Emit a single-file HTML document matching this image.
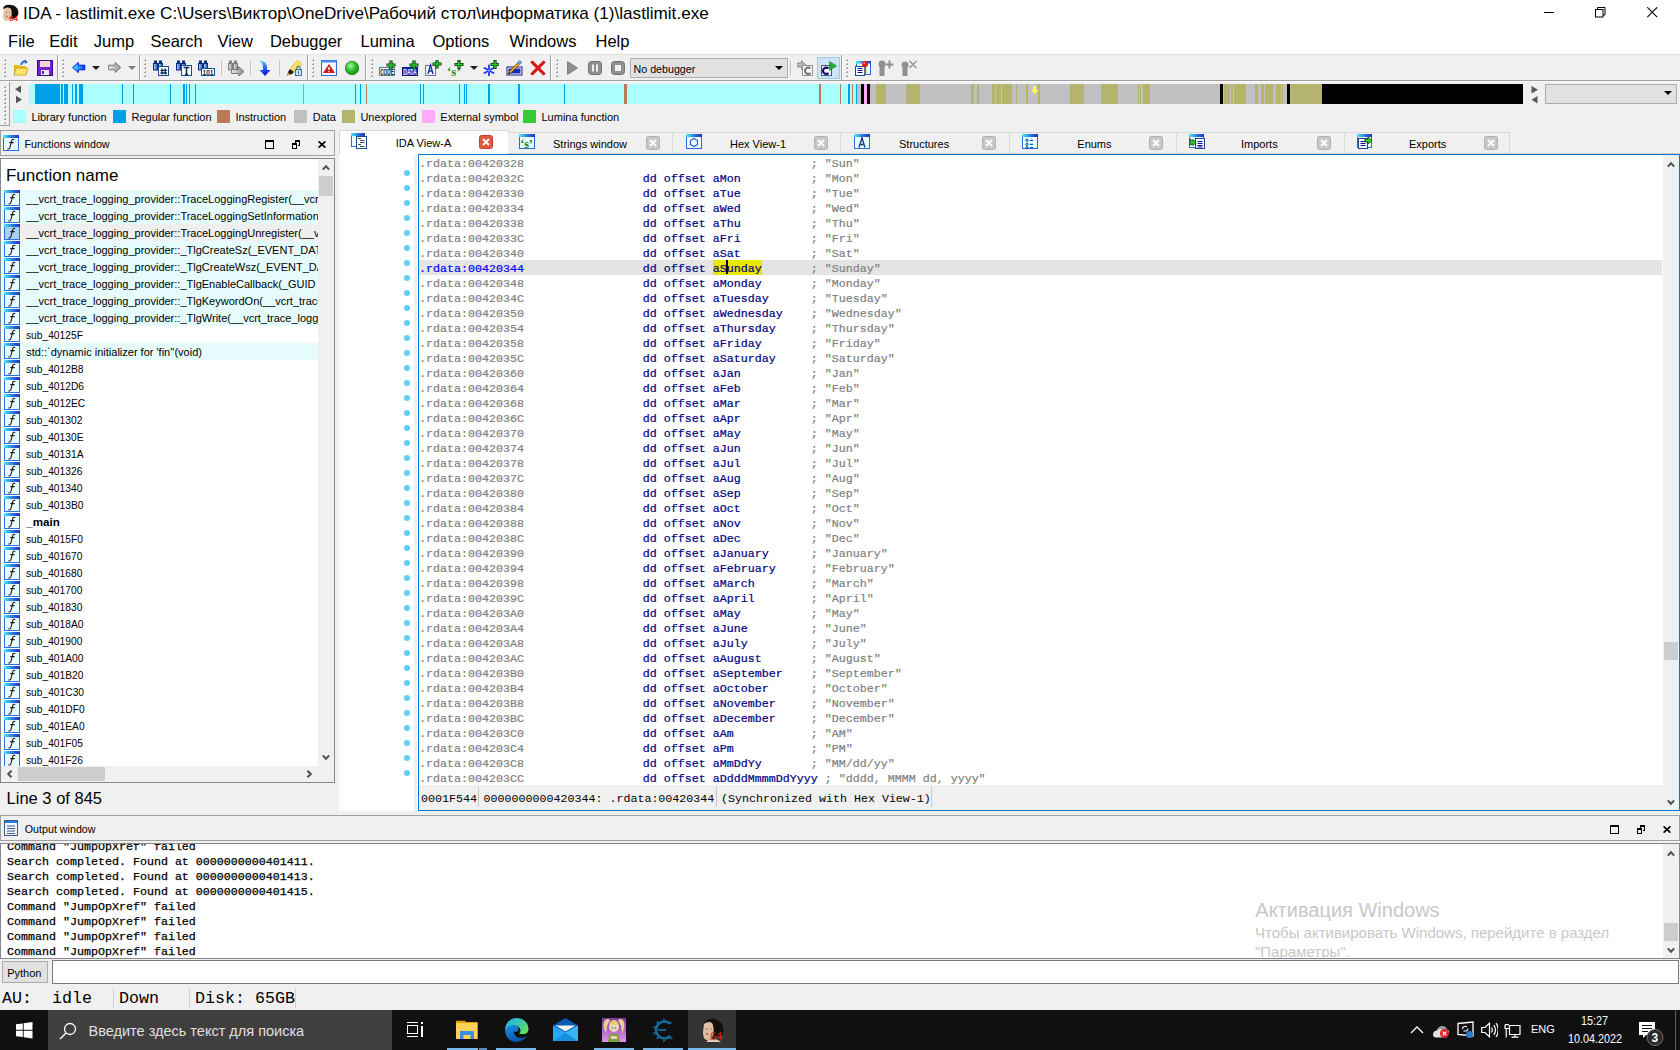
<!DOCTYPE html><html><head><meta charset='utf-8'><style>
*{margin:0;padding:0;box-sizing:border-box}
html,body{width:1680px;height:1050px;overflow:hidden;background:#f0f0f0}
body{position:relative;font-family:"Liberation Sans",sans-serif;color:#000}
div{position:absolute}
.t{white-space:pre;line-height:1}
.m{font-family:"Liberation Mono",monospace;white-space:pre;line-height:15px;font-size:11.67px}
</style></head><body><svg width="0" height="0" style="position:absolute"><defs><linearGradient id="tbar" x1="0" x2="1"><stop offset="0" stop-color="#50e8ff"/><stop offset=".5" stop-color="#2a80e0"/><stop offset="1" stop-color="#2030c8"/></linearGradient><linearGradient id="bin" x1="0" x2="1"><stop offset="0" stop-color="#b8e0ff"/><stop offset="1" stop-color="#1a50c0"/></linearGradient><linearGradient id="bing" x1="0" x2="1"><stop offset="0" stop-color="#e8e8e8"/><stop offset="1" stop-color="#888"/></linearGradient><linearGradient id="darr" x1="0" y1="0" x2=".3" y2="1"><stop offset="0" stop-color="#60e8ff"/><stop offset=".6" stop-color="#2060f0"/><stop offset="1" stop-color="#1010e0"/></linearGradient></defs></svg><div style="left:0px;top:0px;width:1680px;height:54px;background:#fff"></div><div class="t" style="left:23px;top:4.51px;font-size:17px;transform:scaleX(1.0075);transform-origin:0 0">IDA - lastlimit.exe C:\Users\Виктор\OneDrive\Рабочий стол\информатика (1)\lastlimit.exe</div><div class="t" style="left:8.1px;top:32.53px;font-size:16.5px;">File</div><div class="t" style="left:49.2px;top:32.53px;font-size:16.5px;">Edit</div><div class="t" style="left:93.8px;top:32.53px;font-size:16.5px;">Jump</div><div class="t" style="left:150.5px;top:32.53px;font-size:16.5px;">Search</div><div class="t" style="left:217.5px;top:32.53px;font-size:16.5px;">View</div><div class="t" style="left:269.9px;top:32.53px;font-size:16.5px;">Debugger</div><div class="t" style="left:360.5px;top:32.53px;font-size:16.5px;">Lumina</div><div class="t" style="left:432.5px;top:32.53px;font-size:16.5px;">Options</div><div class="t" style="left:509.5px;top:32.53px;font-size:16.5px;">Windows</div><div class="t" style="left:595.5px;top:32.53px;font-size:16.5px;">Help</div><div style="left:1544px;top:12px;width:10px;height:1px;background:#000"></div><svg style="position:absolute;left:1595px;top:7px;" width="11" height="11" viewBox="0 0 11 11"><rect x="0.5" y="2.5" width="7.5" height="7.5" fill="none" stroke="#000"/><path d="M2.5 2.5V0.5H10V8H8" fill="none" stroke="#000"/></svg><svg style="position:absolute;left:1647px;top:7px;" width="11" height="11" viewBox="0 0 11 11"><path d="M0.3 0.3L10.2 10.2M10.2 0.3L0.3 10.2" stroke="#000" stroke-width="1.1"/></svg><svg style="position:absolute;left:2px;top:4px;" width="17" height="18" viewBox="0 0 17 18"><path d="M1 4C2 1 6 0 9 1c3 0 6 2 7 5 1 3 0 6-2 8l-4 1z" fill="#120c0a"/><path d="M2 5c2-2 5-2 7 0 1 2 1 6 0 9-1 2-3 3-5 3-2 0-3-3-3-6z" fill="#e2c2a8"/><path d="M3.5 8.5h2M7 8.5h1.5" stroke="#a08070" stroke-width=".8"/><path d="M4 12.5c.6-.5 1.2-.5 1.6 0" stroke="#b03020" stroke-width=".9"/><text x="7" y="16.5" font-family="Liberation Sans" font-weight="bold" font-size="8" fill="#e03018">64</text></svg><div style="left:0px;top:54px;width:1680px;height:1px;background:#e3e3e3"></div><div style="left:0px;top:80px;width:1680px;height:1px;background:#a0a0a0"></div><div style="left:0px;top:81px;width:1680px;height:1px;background:#fafafa"></div><div style="left:4px;top:59px;width:2px;height:2px;background:linear-gradient(135deg,#fff 0 40%,#a0a0a0 40%)"></div><div style="left:4px;top:63px;width:2px;height:2px;background:linear-gradient(135deg,#fff 0 40%,#a0a0a0 40%)"></div><div style="left:4px;top:67px;width:2px;height:2px;background:linear-gradient(135deg,#fff 0 40%,#a0a0a0 40%)"></div><div style="left:4px;top:71px;width:2px;height:2px;background:linear-gradient(135deg,#fff 0 40%,#a0a0a0 40%)"></div><div style="left:4px;top:75px;width:2px;height:2px;background:linear-gradient(135deg,#fff 0 40%,#a0a0a0 40%)"></div><div style="left:62px;top:59px;width:2px;height:2px;background:linear-gradient(135deg,#fff 0 40%,#a0a0a0 40%)"></div><div style="left:62px;top:63px;width:2px;height:2px;background:linear-gradient(135deg,#fff 0 40%,#a0a0a0 40%)"></div><div style="left:62px;top:67px;width:2px;height:2px;background:linear-gradient(135deg,#fff 0 40%,#a0a0a0 40%)"></div><div style="left:62px;top:71px;width:2px;height:2px;background:linear-gradient(135deg,#fff 0 40%,#a0a0a0 40%)"></div><div style="left:62px;top:75px;width:2px;height:2px;background:linear-gradient(135deg,#fff 0 40%,#a0a0a0 40%)"></div><div style="left:144px;top:59px;width:2px;height:2px;background:linear-gradient(135deg,#fff 0 40%,#a0a0a0 40%)"></div><div style="left:144px;top:63px;width:2px;height:2px;background:linear-gradient(135deg,#fff 0 40%,#a0a0a0 40%)"></div><div style="left:144px;top:67px;width:2px;height:2px;background:linear-gradient(135deg,#fff 0 40%,#a0a0a0 40%)"></div><div style="left:144px;top:71px;width:2px;height:2px;background:linear-gradient(135deg,#fff 0 40%,#a0a0a0 40%)"></div><div style="left:144px;top:75px;width:2px;height:2px;background:linear-gradient(135deg,#fff 0 40%,#a0a0a0 40%)"></div><div style="left:312px;top:59px;width:2px;height:2px;background:linear-gradient(135deg,#fff 0 40%,#a0a0a0 40%)"></div><div style="left:312px;top:63px;width:2px;height:2px;background:linear-gradient(135deg,#fff 0 40%,#a0a0a0 40%)"></div><div style="left:312px;top:67px;width:2px;height:2px;background:linear-gradient(135deg,#fff 0 40%,#a0a0a0 40%)"></div><div style="left:312px;top:71px;width:2px;height:2px;background:linear-gradient(135deg,#fff 0 40%,#a0a0a0 40%)"></div><div style="left:312px;top:75px;width:2px;height:2px;background:linear-gradient(135deg,#fff 0 40%,#a0a0a0 40%)"></div><div style="left:371px;top:59px;width:2px;height:2px;background:linear-gradient(135deg,#fff 0 40%,#a0a0a0 40%)"></div><div style="left:371px;top:63px;width:2px;height:2px;background:linear-gradient(135deg,#fff 0 40%,#a0a0a0 40%)"></div><div style="left:371px;top:67px;width:2px;height:2px;background:linear-gradient(135deg,#fff 0 40%,#a0a0a0 40%)"></div><div style="left:371px;top:71px;width:2px;height:2px;background:linear-gradient(135deg,#fff 0 40%,#a0a0a0 40%)"></div><div style="left:371px;top:75px;width:2px;height:2px;background:linear-gradient(135deg,#fff 0 40%,#a0a0a0 40%)"></div><div style="left:556px;top:59px;width:2px;height:2px;background:linear-gradient(135deg,#fff 0 40%,#a0a0a0 40%)"></div><div style="left:556px;top:63px;width:2px;height:2px;background:linear-gradient(135deg,#fff 0 40%,#a0a0a0 40%)"></div><div style="left:556px;top:67px;width:2px;height:2px;background:linear-gradient(135deg,#fff 0 40%,#a0a0a0 40%)"></div><div style="left:556px;top:71px;width:2px;height:2px;background:linear-gradient(135deg,#fff 0 40%,#a0a0a0 40%)"></div><div style="left:556px;top:75px;width:2px;height:2px;background:linear-gradient(135deg,#fff 0 40%,#a0a0a0 40%)"></div><div style="left:846px;top:59px;width:2px;height:2px;background:linear-gradient(135deg,#fff 0 40%,#a0a0a0 40%)"></div><div style="left:846px;top:63px;width:2px;height:2px;background:linear-gradient(135deg,#fff 0 40%,#a0a0a0 40%)"></div><div style="left:846px;top:67px;width:2px;height:2px;background:linear-gradient(135deg,#fff 0 40%,#a0a0a0 40%)"></div><div style="left:846px;top:71px;width:2px;height:2px;background:linear-gradient(135deg,#fff 0 40%,#a0a0a0 40%)"></div><div style="left:846px;top:75px;width:2px;height:2px;background:linear-gradient(135deg,#fff 0 40%,#a0a0a0 40%)"></div><div style="left:57px;top:55px;width:1px;height:25px;background:#a0a0a0"></div><div style="left:58px;top:55px;width:1px;height:25px;background:#fff"></div><div style="left:139px;top:55px;width:1px;height:25px;background:#a0a0a0"></div><div style="left:140px;top:55px;width:1px;height:25px;background:#fff"></div><div style="left:307px;top:55px;width:1px;height:25px;background:#a0a0a0"></div><div style="left:308px;top:55px;width:1px;height:25px;background:#fff"></div><div style="left:365px;top:55px;width:1px;height:25px;background:#a0a0a0"></div><div style="left:366px;top:55px;width:1px;height:25px;background:#fff"></div><div style="left:550px;top:55px;width:1px;height:25px;background:#a0a0a0"></div><div style="left:551px;top:55px;width:1px;height:25px;background:#fff"></div><div style="left:841px;top:55px;width:1px;height:25px;background:#a0a0a0"></div><div style="left:842px;top:55px;width:1px;height:25px;background:#fff"></div><div style="left:221px;top:60px;width:1px;height:16px;background:#c8c8c8"></div><div style="left:250px;top:60px;width:1px;height:16px;background:#c8c8c8"></div><div style="left:279px;top:60px;width:1px;height:16px;background:#c8c8c8"></div><div style="left:790px;top:60px;width:1px;height:16px;background:#c8c8c8"></div><svg style="position:absolute;left:13px;top:60px;" width="16" height="16" viewBox="0 0 16 16"><path d="M1 5h5l1 1h6v8H1z" fill="#e6b820"/><path d="M3 8h12l-2 7H1z" fill="#fbe36a" stroke="#c89a10" stroke-width=".8"/><path d="M8 5c1-3 3-4 5-4" stroke="#2a6ad8" stroke-width="2" fill="none"/><path d="M12 0l3 2-3 2z" fill="#2a6ad8"/></svg><svg style="position:absolute;left:37px;top:60px;" width="16" height="16" viewBox="0 0 16 16"><rect x="0.5" y="0.5" width="15" height="15" fill="#7a20d0" stroke="#3a0a80"/><rect x="3" y="1" width="10" height="6" fill="#f0d8d8"/><rect x="4" y="10" width="8" height="5" fill="#e8e8f8"/><rect x="5" y="11" width="2" height="3" fill="#5a20b0"/></svg><svg style="position:absolute;left:72px;top:62px;" width="14" height="12" viewBox="0 0 14 12"><defs><linearGradient id="ba" x1="0" x2="1"><stop offset="0" stop-color="#40f0ff"/><stop offset="1" stop-color="#1040d0"/></linearGradient></defs><path d="M0.7 5.5L6.3 0.5V3.2H12.8V7.8H6.3V10.5z" fill="url(#ba)" stroke="#0010f0" stroke-width="1"/></svg><svg style="position:absolute;left:92px;top:66px;" width="8" height="5" viewBox="0 0 8 5"><path d="M0 0H8L4 4z" fill="#202020"/></svg><svg style="position:absolute;left:108px;top:62px;" width="14" height="12" viewBox="0 0 14 12"><defs><linearGradient id="fa" x1="0" x2="1"><stop offset="0" stop-color="#e8e8e8"/><stop offset="1" stop-color="#909090"/></linearGradient></defs><path d="M12.8 5.5L7.2 0.5V3.2H0.7V7.8H7.2V10.5z" fill="url(#fa)" stroke="#787878" stroke-width="1"/></svg><svg style="position:absolute;left:128px;top:66px;" width="8" height="5" viewBox="0 0 8 5"><path d="M0 0H8L4 4z" fill="#808080"/></svg><svg style="position:absolute;left:153px;top:60px;" width="16" height="16" viewBox="0 0 16 16"><rect x="1" y="0.5" width="3" height="3" fill="#0a2a80"/><rect x="6" y="0.5" width="3" height="3" fill="#0a2a80"/><rect x="0.5" y="3.5" width="4" height="6.5" fill="url(#bin)" stroke="#0a2a80"/><rect x="5.5" y="3.5" width="4" height="6.5" fill="url(#bin)" stroke="#0a2a80"/><rect x="4.5" y="5" width="1" height="2" fill="#0a2a80"/><rect x="5.5" y="6.5" width="10" height="9" fill="#fff" stroke="#1a4a8a"/><path d="M9 8.5v6M12.2 8.5v6M7.5 10.3h6.5M7.5 13h6.5" stroke="#0a2a5a" stroke-width="1.3"/></svg><svg style="position:absolute;left:176px;top:60px;" width="16" height="16" viewBox="0 0 16 16"><rect x="1" y="0.5" width="3" height="3" fill="#0a2a80"/><rect x="6" y="0.5" width="3" height="3" fill="#0a2a80"/><rect x="0.5" y="3.5" width="4" height="6.5" fill="url(#bin)" stroke="#0a2a80"/><rect x="5.5" y="3.5" width="4" height="6.5" fill="url(#bin)" stroke="#0a2a80"/><rect x="4.5" y="5" width="1" height="2" fill="#0a2a80"/><rect x="5.5" y="5.5" width="10" height="10" fill="#fff" stroke="#1a4a8a"/><path d="M7.5 7.5h6M10.5 7.5v7M9 14.5h3" stroke="#0a2a5a" stroke-width="1.6"/></svg><svg style="position:absolute;left:198px;top:60px;" width="17" height="16" viewBox="0 0 17 16"><rect x="1" y="0.5" width="3" height="3" fill="#0a2a80"/><rect x="6" y="0.5" width="3" height="3" fill="#0a2a80"/><rect x="0.5" y="3.5" width="4" height="6.5" fill="url(#bin)" stroke="#0a2a80"/><rect x="5.5" y="3.5" width="4" height="6.5" fill="url(#bin)" stroke="#0a2a80"/><rect x="4.5" y="5" width="1" height="2" fill="#0a2a80"/><rect x="3.5" y="8.5" width="13" height="7" fill="#fff" stroke="#1a4a8a"/><text x="4.6" y="14.6" textLength="10.8" lengthAdjust="spacingAndGlyphs" font-family="Liberation Sans" font-weight="bold" font-size="7" fill="#0a2a5a">101</text></svg><svg style="position:absolute;left:228px;top:60px;" width="17" height="16" viewBox="0 0 17 16"><rect x="1" y="0.5" width="3" height="3" fill="#808080"/><rect x="6" y="0.5" width="3" height="3" fill="#808080"/><rect x="0.5" y="3.5" width="4" height="6.5" fill="url(#bing)" stroke="#808080"/><rect x="5.5" y="3.5" width="4" height="6.5" fill="url(#bing)" stroke="#808080"/><rect x="4.5" y="5" width="1" height="2" fill="#808080"/><path d="M3.5 9.5h7v-3l5.5 5-5.5 5v-3h-7z" fill="url(#bing)" stroke="#787878" stroke-width="1"/></svg><svg style="position:absolute;left:258px;top:60px;" width="14" height="16" viewBox="0 0 14 16"><path d="M1 0.5C6 0.5 9 3 9 8V10h3.5L7 16 1.5 10H5V8.5C5 5 4 2 1 0.5z" fill="url(#darr)"/></svg><svg style="position:absolute;left:286px;top:60px;" width="16" height="16" viewBox="0 0 16 16"><path d="M4 9L10 1.5c1-1 2.5-1 3.5 0l1 1c1 1 1 2.5 0 3.5L8 12z" fill="#f8e060" stroke="#e0b010" stroke-width=".6"/><path d="M4 9l4 3-2 2-5 1.5 1.5-4.5z" fill="#202020"/><path d="M1 15.5l3-1-2-2z" fill="#f0b000"/><rect x="9.5" y="9.5" width="6" height="6" fill="#c8dcf0" stroke="#4070a0"/><path d="M10.8 9.5V8a1.7 1.7 0 0 1 3.4 0v1.5" fill="none" stroke="#4070a0" stroke-width="1.1"/><rect x="12" y="11.5" width="1" height="2" fill="#305080"/></svg><svg style="position:absolute;left:321px;top:60px;" width="16" height="16" viewBox="0 0 16 16"><rect x="0.5" y="0.5" width="15" height="15" fill="#f4f8ff" stroke="#2a6ad8"/><rect x="0.5" y="0.5" width="15" height="2" fill="#4a90f0"/><path d="M8 4L14 13H2z" fill="#d01818"/><rect x="7.3" y="7" width="1.4" height="3" fill="#fff"/><rect x="7.3" y="11" width="1.4" height="1.2" fill="#fff"/></svg><svg style="position:absolute;left:345px;top:60px;" width="15" height="16" viewBox="0 0 15 16"><defs><radialGradient id="gc" cx=".4" cy=".35" r=".7"><stop offset="0" stop-color="#a8f8a8"/><stop offset=".5" stop-color="#30c030"/><stop offset="1" stop-color="#108810"/></radialGradient></defs><circle cx="7" cy="8" r="6.8" fill="url(#gc)" stroke="#0a700a" stroke-width=".6"/></svg><svg style="position:absolute;left:379px;top:60px;" width="17" height="16" viewBox="0 0 17 16"><rect x="0.5" y="7.5" width="15" height="8" fill="#e8f0fa" stroke="#6a7a90"/><text x="1.2" y="14.6" textLength="13.6" lengthAdjust="spacingAndGlyphs" font-family="Liberation Sans" font-weight="bold" font-size="8.5" fill="#0a2a40">CODE</text><path d="M12 0.5v9M7.5 5h9" stroke="#063806" stroke-width="3.2"/><path d="M12 1.2000000000000002v7.6M8.2 5h7.6" stroke="#28c828" stroke-width="1.5"/></svg><svg style="position:absolute;left:402px;top:60px;" width="17" height="16" viewBox="0 0 17 16"><rect x="0.5" y="7.5" width="15" height="8" fill="#1a30c0" stroke="#0a1a80"/><text x="1.2" y="14.6" textLength="13.6" lengthAdjust="spacingAndGlyphs" font-family="Liberation Sans" font-weight="bold" font-size="8.5" fill="#e0f0ff">DATA</text><path d="M12 0.5v9M7.5 5h9" stroke="#063806" stroke-width="3.2"/><path d="M12 1.2000000000000002v7.6M8.2 5h7.6" stroke="#28c828" stroke-width="1.5"/></svg><svg style="position:absolute;left:425px;top:60px;" width="17" height="16" viewBox="0 0 17 16"><rect x="0.5" y="5.5" width="10" height="10" fill="#f0f4fa" stroke="#6a7a90"/><path d="M3 14L5.5 5 8 14M3.8 11h3.4" fill="none" stroke="#1a3aa0" stroke-width="1.4"/><path d="M12 -0.5v9M7.5 4h9" stroke="#063806" stroke-width="3.2"/><path d="M12 0.20000000000000018v7.6M8.2 4h7.6" stroke="#28c828" stroke-width="1.5"/></svg><svg style="position:absolute;left:447px;top:60px;" width="17" height="16" viewBox="0 0 17 16"><text x="0" y="15.5" font-family="Liberation Serif" font-weight="bold" font-size="13" fill="#208a20">‘s’</text><path d="M12 0.0v9M7.5 4.5h9" stroke="#063806" stroke-width="3.2"/><path d="M12 0.7000000000000002v7.6M8.2 4.5h7.6" stroke="#28c828" stroke-width="1.5"/></svg><svg style="position:absolute;left:470px;top:66px;" width="8" height="5" viewBox="0 0 8 5"><path d="M0 0H8L4 4z" fill="#202020"/></svg><svg style="position:absolute;left:483px;top:60px;" width="16" height="16" viewBox="0 0 16 16"><path d="M6 5.5v10M1.5 8l9 5M10.5 8l-9 5" stroke="#2030f0" stroke-width="1.8" stroke-linecap="round"/><circle cx="6" cy="10.5" r="1" fill="#80c0ff"/><path d="M12 0.0v9M7.5 4.5h9" stroke="#063806" stroke-width="3.2"/><path d="M12 0.7000000000000002v7.6M8.2 4.5h7.6" stroke="#28c828" stroke-width="1.5"/></svg><svg style="position:absolute;left:506px;top:60px;" width="17" height="16" viewBox="0 0 17 16"><rect x="0.5" y="6.5" width="16" height="9" fill="#0a1a70"/><rect x="1.5" y="7.5" width="14" height="7" fill="#fff"/><rect x="2.5" y="8.5" width="12" height="5" fill="#1a2ab8"/><path d="M3.5 13L13 3" stroke="#803800" stroke-width="2.6"/><path d="M3.5 13L13 3" stroke="#f8c030" stroke-width="1.4"/><circle cx="13.8" cy="2.4" r="1.6" fill="#60c8f0" stroke="#2060a0" stroke-width=".6"/><path d="M2.5 14l1.5-1.5" stroke="#000" stroke-width="1.2"/></svg><svg style="position:absolute;left:530px;top:60px;" width="16" height="16" viewBox="0 0 16 16"><path d="M1.5 1.5L14.5 14.5M14.5 1.5L1.5 14.5" stroke="#b80000" stroke-width="3"/><path d="M1.5 1.5L14.5 14.5M14.5 1.5L1.5 14.5" stroke="#f01818" stroke-width="1.6"/></svg><svg style="position:absolute;left:567px;top:61px;" width="11" height="14" viewBox="0 0 11 14"><path d="M0.5 0.5L10.5 7 0.5 13.5z" fill="#909090" stroke="#808080"/></svg><svg style="position:absolute;left:588px;top:61px;" width="14" height="14" viewBox="0 0 14 14"><rect x="0.5" y="0.5" width="13" height="13" rx="3" fill="#909090" stroke="#707070"/><rect x="4" y="3.5" width="2" height="7" fill="#f0f0f0"/><rect x="8" y="3.5" width="2" height="7" fill="#f0f0f0"/></svg><svg style="position:absolute;left:611px;top:61px;" width="14" height="14" viewBox="0 0 14 14"><rect x="0.5" y="0.5" width="13" height="13" rx="3" fill="#909090" stroke="#707070"/><rect x="4" y="4" width="6" height="6" fill="#f0f0f0"/></svg><div style="left:630px;top:58px;width:158px;height:20px;background:#e1e1e1;border:1px solid #adadad"></div><div class="t" style="left:633.5px;top:63.94px;font-size:10.7px;">No debugger</div><svg style="position:absolute;left:775px;top:66px;" width="8" height="5" viewBox="0 0 8 5"><path d="M0 0H8L4 4z" fill="#000"/></svg><svg style="position:absolute;left:797px;top:60px;" width="17" height="16" viewBox="0 0 17 16"><path d="M0 3h4.5V0.5L9 5 4.5 9.5V7H0z" fill="#b8b8b8" stroke="#808080" stroke-width=".8"/><rect x="5.5" y="5.5" width="10" height="10" fill="#fafafa" stroke="#909090"/><path d="M13.5 8.5a3.2 3.2 0 1 0 0 4.5" fill="none" stroke="#707070" stroke-width="2"/></svg><div style="left:817px;top:57px;width:23px;height:22px;background:#cce4f7;border:1px solid #99c9ef"></div><svg style="position:absolute;left:821px;top:60px;" width="17" height="16" viewBox="0 0 17 16"><rect x="0.5" y="5.5" width="10" height="10" fill="#fff" stroke="#3a5a90"/><path d="M7.5 8.5a3.2 3.2 0 1 0 0 4.5" fill="none" stroke="#0a0a70" stroke-width="2.2"/><path d="M8.5 1.5L15.5 6 8.5 10.5z" fill="#20b030" stroke="#107010" stroke-width=".6"/></svg><svg style="position:absolute;left:855px;top:60px;" width="16" height="16" viewBox="0 0 16 16"><rect x="1.5" y="1.5" width="14" height="13" fill="#eaffff" stroke="#2a6ad8"/><rect x="1" y="1" width="15" height="2.5" fill="url(#tbar)"/><rect x="0.5" y="6.5" width="9" height="9" fill="#fff" stroke="#1a4a88"/><path d="M2.5 8.5h5M2.5 10.5h5M2.5 12.5h5" stroke="#0a0aa0"/><rect x="9" y="6" width="2.2" height="8" fill="#707070"/><circle cx="10" cy="4" r="3" fill="#f01010"/><circle cx="9.2" cy="3.2" r="1" fill="#ff9090"/></svg><svg style="position:absolute;left:878px;top:60px;" width="16" height="16" viewBox="0 0 16 16"><circle cx="4" cy="4" r="3.5" fill="#909090"/><rect x="1.5" y="6" width="5" height="10" fill="#909090"/><path d="M11.5 0.5v8M7.5 4.5h8" stroke="#909090" stroke-width="2"/></svg><svg style="position:absolute;left:901px;top:60px;" width="16" height="16" viewBox="0 0 16 16"><circle cx="4" cy="5" r="3.5" fill="#909090"/><rect x="1.5" y="7" width="5" height="9" fill="#909090"/><path d="M8.5 1l7 7M15.5 1l-7 7" stroke="#909090" stroke-width="1.4"/></svg><div style="left:0px;top:82px;width:10px;height:44px;border-right:1px solid #a0a0a0"></div><div style="left:0px;top:125px;width:10px;height:1px;background:#a0a0a0"></div><div style="left:4px;top:86px;width:2px;height:2px;background:linear-gradient(135deg,#fff 0 40%,#a0a0a0 40%)"></div><div style="left:4px;top:90px;width:2px;height:2px;background:linear-gradient(135deg,#fff 0 40%,#a0a0a0 40%)"></div><div style="left:4px;top:94px;width:2px;height:2px;background:linear-gradient(135deg,#fff 0 40%,#a0a0a0 40%)"></div><div style="left:4px;top:98px;width:2px;height:2px;background:linear-gradient(135deg,#fff 0 40%,#a0a0a0 40%)"></div><div style="left:4px;top:102px;width:2px;height:2px;background:linear-gradient(135deg,#fff 0 40%,#a0a0a0 40%)"></div><div style="left:4px;top:106px;width:2px;height:2px;background:linear-gradient(135deg,#fff 0 40%,#a0a0a0 40%)"></div><div style="left:4px;top:110px;width:2px;height:2px;background:linear-gradient(135deg,#fff 0 40%,#a0a0a0 40%)"></div><div style="left:4px;top:114px;width:2px;height:2px;background:linear-gradient(135deg,#fff 0 40%,#a0a0a0 40%)"></div><div style="left:4px;top:118px;width:2px;height:2px;background:linear-gradient(135deg,#fff 0 40%,#a0a0a0 40%)"></div><div style="left:4px;top:122px;width:2px;height:2px;background:linear-gradient(135deg,#fff 0 40%,#a0a0a0 40%)"></div><svg style="position:absolute;left:15px;top:85px;" width="8" height="19" viewBox="0 0 8 19"><path d="M6 0.6V8.1L0 4.35z" fill="#555"/><path d="M1 10.7V18.2L7 14.45z" fill="#555"/></svg><svg style="position:absolute;left:29px;top:84px;shape-rendering:crispEdges" width="1494" height="20" viewBox="0 0 1494 20"><rect x="0" y="0" width="1494" height="20" fill="#c0c0c0"/><rect x="0" y="0" width="847" height="20" fill="#aaffff"/><rect x="6" y="0" width="25" height="20" fill="#00a0e8"/><rect x="32" y="0" width="1.5" height="20" fill="#00a0e8"/><rect x="35" y="0" width="4" height="20" fill="#00a0e8"/><rect x="43" y="0" width="1.2999999999999972" height="20" fill="#00a0e8"/><rect x="46" y="0" width="1.5" height="20" fill="#00a0e8"/><rect x="50" y="0" width="4" height="20" fill="#00a0e8"/><rect x="93" y="0" width="1" height="20" fill="#00a0e8"/><rect x="104" y="0" width="1" height="20" fill="#00a0e8"/><rect x="141" y="0" width="1" height="20" fill="#00a0e8"/><rect x="154" y="0" width="1.5999999999999943" height="20" fill="#00a0e8"/><rect x="156.6" y="0" width="0.9000000000000057" height="20" fill="#00a0e8"/><rect x="160" y="0" width="1" height="20" fill="#00a0e8"/><rect x="166.3" y="0" width="1.0" height="20" fill="#00a0e8"/><rect x="326" y="0" width="1" height="20" fill="#00a0e8"/><rect x="331" y="0" width="1" height="20" fill="#00a0e8"/><rect x="391" y="0" width="1" height="20" fill="#00a0e8"/><rect x="394" y="0" width="1" height="20" fill="#00a0e8"/><rect x="430" y="0" width="1" height="20" fill="#00a0e8"/><rect x="435" y="0" width="1" height="20" fill="#00a0e8"/><rect x="437" y="0" width="1" height="20" fill="#00a0e8"/><rect x="459" y="0" width="2" height="20" fill="#00a0e8"/><rect x="489" y="0" width="2" height="20" fill="#00a0e8"/><rect x="535" y="0" width="1" height="20" fill="#00a0e8"/><rect x="819" y="0" width="2" height="20" fill="#00a0e8"/><rect x="826.8" y="0" width="1.2000000000000455" height="20" fill="#00a0e8"/><rect x="274" y="0" width="1" height="20" fill="#a0a0a0"/><rect x="337" y="0" width="1" height="20" fill="#b87a58"/><rect x="594.5" y="0" width="3.0" height="20" fill="#b87a58"/><rect x="790" y="0" width="2" height="20" fill="#b87a58"/><rect x="811" y="0" width="1" height="20" fill="#b87a58"/><rect x="823" y="0" width="1" height="20" fill="#b87a58"/><rect x="828" y="0" width="19" height="20" fill="#c0c0c0"/><rect x="832" y="0" width="3" height="20" fill="#000"/><rect x="835" y="0" width="3" height="20" fill="#ffaaff"/><rect x="838" y="0" width="3" height="20" fill="#000"/><rect x="847" y="0" width="10" height="20" fill="#b4b46e"/><rect x="877" y="0" width="14" height="20" fill="#b4b46e"/><rect x="942" y="0" width="3" height="20" fill="#b4b46e"/><rect x="948" y="0" width="1.5" height="20" fill="#b4b46e"/><rect x="963" y="0" width="3" height="20" fill="#b4b46e"/><rect x="967" y="0" width="5" height="20" fill="#b4b46e"/><rect x="973" y="0" width="10" height="20" fill="#b4b46e"/><rect x="987" y="0" width="1" height="20" fill="#b4b46e"/><rect x="997" y="0" width="2" height="20" fill="#b4b46e"/><rect x="1009" y="0" width="2" height="20" fill="#b4b46e"/><rect x="1041" y="0" width="14" height="20" fill="#b4b46e"/><rect x="1072" y="0" width="17" height="20" fill="#b4b46e"/><rect x="1109" y="0" width="1" height="20" fill="#b4b46e"/><rect x="1111" y="0" width="1" height="20" fill="#b4b46e"/><rect x="1114" y="0" width="7" height="20" fill="#b4b46e"/><rect x="1195" y="0" width="6" height="20" fill="#b4b46e"/><rect x="1202" y="0" width="2" height="20" fill="#b4b46e"/><rect x="1205" y="0" width="12" height="20" fill="#b4b46e"/><rect x="1226" y="0" width="3" height="20" fill="#b4b46e"/><rect x="1232" y="0" width="3" height="20" fill="#b4b46e"/><rect x="1236" y="0" width="8" height="20" fill="#b4b46e"/><rect x="1247" y="0" width="5" height="20" fill="#b4b46e"/><rect x="1253" y="0" width="1" height="20" fill="#b4b46e"/><rect x="1261" y="0" width="32" height="20" fill="#b4b46e"/><rect x="1191" y="0" width="3" height="20" fill="#000"/><rect x="1257.5" y="0" width="3.5" height="20" fill="#000"/><rect x="1293" y="0" width="201" height="20" fill="#000"/><path d="M3.5 2h3v4h2l-3.5 4-3.5-4h2z" fill="#ffff40" transform="translate(1000.5,0)"/></svg><svg style="position:absolute;left:1531px;top:86px;" width="8" height="18" viewBox="0 0 8 18"><path d="M0.5 0V7.5L7 3.75z" fill="#5a5a5a"/><path d="M6.5 10V17.5L0.5 13.75z" fill="#5a5a5a"/></svg><div style="left:1545px;top:84px;width:132px;height:20px;background:#e1e1e1;border:1px solid #adadad"></div><svg style="position:absolute;left:1664px;top:91px;" width="8" height="5" viewBox="0 0 8 5"><path d="M0 0H8L4 4z" fill="#000"/></svg><div style="left:13px;top:110px;width:13px;height:13px;background:#aaffff"></div><div class="t" style="left:31.4px;top:112.19px;font-size:11px;">Library function</div><div style="left:113px;top:110px;width:13px;height:13px;background:#00a0e8"></div><div class="t" style="left:131.5px;top:112.19px;font-size:11px;">Regular function</div><div style="left:217px;top:110px;width:13px;height:13px;background:#b87a58"></div><div class="t" style="left:235.4px;top:112.19px;font-size:11px;">Instruction</div><div style="left:294px;top:110px;width:13px;height:13px;background:#c0c0c0"></div><div class="t" style="left:312.7px;top:112.19px;font-size:11px;">Data</div><div style="left:342px;top:110px;width:13px;height:13px;background:#b4b46e"></div><div class="t" style="left:360.4px;top:112.19px;font-size:11px;">Unexplored</div><div style="left:422px;top:110px;width:13px;height:13px;background:#ffaaff"></div><div class="t" style="left:440.3px;top:112.19px;font-size:11px;">External symbol</div><div style="left:523px;top:110px;width:13px;height:13px;background:#33cc33"></div><div class="t" style="left:541.5px;top:112.19px;font-size:11px;">Lumina function</div><div style="left:0px;top:130px;width:335px;height:26px;border:1px solid #a0a0a0;background:#f0f0f0"></div><svg style="position:absolute;left:3px;top:135px;" width="16" height="16" viewBox="0 0 16 16"><rect x="0.5" y="0.5" width="15" height="15" fill="#e8fcff" stroke="#2a70e0"/><rect x="0" y="0" width="16" height="3" fill="url(#tbar)"/><path d="M11.3 4.6c-.9-.7-2.1-.4-2.5.9L6.9 12.6c-.4 1.3-1.5 1.7-2.5 1.1M6.3 7.6h4.3" fill="none" stroke="#151515" stroke-width="1.05"/></svg><div class="t" style="left:24.6px;top:138.74px;font-size:10.7px;">Functions window</div><svg style="position:absolute;left:265px;top:140px;shape-rendering:crispEdges" width="9" height="9" viewBox="0 0 9 9"><path d="M0 0H9V9H0z M1 2H8V8H1z" fill="#000" fill-rule="evenodd"/></svg><svg style="position:absolute;left:292px;top:140px;shape-rendering:crispEdges" width="8" height="9" viewBox="0 0 8 9"><path d="M3 0H8V6H6V5H7V2H4V3H3z" fill="#000"/><path d="M0 3H5V9H0z M1 5H4V8H1z" fill="#000" fill-rule="evenodd"/></svg><svg style="position:absolute;left:318px;top:141px;" width="8" height="7" viewBox="0 0 8 7"><path d="M0.6 0.4L7.4 6.6M7.4 0.4L0.6 6.6" stroke="#000" stroke-width="1.7"/></svg><div style="left:0px;top:158px;width:335px;height:625px;border:1px solid #828790;background:#fff"></div><div class="t" style="left:5.9px;top:167.31px;font-size:17px;">Function name</div><div style="left:1px;top:159px;width:317px;height:607px;overflow:hidden"><div style="left:0px;top:31px;width:317px;height:17px;background:#e6fcfc"></div><svg style="position:absolute;left:3px;top:31px;" width="16" height="16" viewBox="0 0 16 16"><rect x="0.5" y="0.5" width="15" height="15" fill="#e8fcff" stroke="#2a70e0"/><rect x="0" y="0" width="16" height="3" fill="url(#tbar)"/><path d="M11.3 4.6c-.9-.7-2.1-.4-2.5.9L6.9 12.6c-.4 1.3-1.5 1.7-2.5 1.1M6.3 7.6h4.3" fill="none" stroke="#151515" stroke-width="1.05"/></svg><div class="t" style="left:25.3px;top:34.99px;font-size:11px;">__vcrt_trace_logging_provider::TraceLoggingRegister(__vcrt_trace</div><div style="left:0px;top:48px;width:317px;height:17px;background:#e6fcfc"></div><svg style="position:absolute;left:3px;top:48px;" width="16" height="16" viewBox="0 0 16 16"><rect x="0.5" y="0.5" width="15" height="15" fill="#e8fcff" stroke="#2a70e0"/><rect x="0" y="0" width="16" height="3" fill="url(#tbar)"/><path d="M11.3 4.6c-.9-.7-2.1-.4-2.5.9L6.9 12.6c-.4 1.3-1.5 1.7-2.5 1.1M6.3 7.6h4.3" fill="none" stroke="#151515" stroke-width="1.05"/></svg><div class="t" style="left:25.3px;top:51.99px;font-size:11px;">__vcrt_trace_logging_provider::TraceLoggingSetInformation(__v</div><div style="left:2px;top:65px;width:315px;height:17px;background:#efefef"></div><svg style="position:absolute;left:3px;top:65px;" width="16" height="16" viewBox="0 0 16 16"><rect x="0.5" y="0.5" width="15" height="15" fill="#a8d0f0" stroke="#2a70e0"/><rect x="0" y="0" width="16" height="3" fill="url(#tbar)"/><path d="M11.3 4.6c-.9-.7-2.1-.4-2.5.9L6.9 12.6c-.4 1.3-1.5 1.7-2.5 1.1M6.3 7.6h4.3" fill="none" stroke="#151515" stroke-width="1.05"/></svg><div class="t" style="left:25.3px;top:68.99px;font-size:11px;">__vcrt_trace_logging_provider::TraceLoggingUnregister(__vcrt</div><div style="left:0px;top:82px;width:317px;height:17px;background:#e6fcfc"></div><svg style="position:absolute;left:3px;top:82px;" width="16" height="16" viewBox="0 0 16 16"><rect x="0.5" y="0.5" width="15" height="15" fill="#e8fcff" stroke="#2a70e0"/><rect x="0" y="0" width="16" height="3" fill="url(#tbar)"/><path d="M11.3 4.6c-.9-.7-2.1-.4-2.5.9L6.9 12.6c-.4 1.3-1.5 1.7-2.5 1.1M6.3 7.6h4.3" fill="none" stroke="#151515" stroke-width="1.05"/></svg><div class="t" style="left:25.3px;top:85.99px;font-size:11px;">__vcrt_trace_logging_provider::_TlgCreateSz(_EVENT_DATA_DES</div><div style="left:0px;top:99px;width:317px;height:17px;background:#e6fcfc"></div><svg style="position:absolute;left:3px;top:99px;" width="16" height="16" viewBox="0 0 16 16"><rect x="0.5" y="0.5" width="15" height="15" fill="#e8fcff" stroke="#2a70e0"/><rect x="0" y="0" width="16" height="3" fill="url(#tbar)"/><path d="M11.3 4.6c-.9-.7-2.1-.4-2.5.9L6.9 12.6c-.4 1.3-1.5 1.7-2.5 1.1M6.3 7.6h4.3" fill="none" stroke="#151515" stroke-width="1.05"/></svg><div class="t" style="left:25.3px;top:102.99px;font-size:11px;">__vcrt_trace_logging_provider::_TlgCreateWsz(_EVENT_DATA_DE</div><div style="left:0px;top:116px;width:317px;height:17px;background:#e6fcfc"></div><svg style="position:absolute;left:3px;top:116px;" width="16" height="16" viewBox="0 0 16 16"><rect x="0.5" y="0.5" width="15" height="15" fill="#e8fcff" stroke="#2a70e0"/><rect x="0" y="0" width="16" height="3" fill="url(#tbar)"/><path d="M11.3 4.6c-.9-.7-2.1-.4-2.5.9L6.9 12.6c-.4 1.3-1.5 1.7-2.5 1.1M6.3 7.6h4.3" fill="none" stroke="#151515" stroke-width="1.05"/></svg><div class="t" style="left:25.3px;top:119.99px;font-size:11px;">__vcrt_trace_logging_provider::_TlgEnableCallback(_GUID const</div><div style="left:0px;top:133px;width:317px;height:17px;background:#e6fcfc"></div><svg style="position:absolute;left:3px;top:133px;" width="16" height="16" viewBox="0 0 16 16"><rect x="0.5" y="0.5" width="15" height="15" fill="#e8fcff" stroke="#2a70e0"/><rect x="0" y="0" width="16" height="3" fill="url(#tbar)"/><path d="M11.3 4.6c-.9-.7-2.1-.4-2.5.9L6.9 12.6c-.4 1.3-1.5 1.7-2.5 1.1M6.3 7.6h4.3" fill="none" stroke="#151515" stroke-width="1.05"/></svg><div class="t" style="left:25.3px;top:136.99px;font-size:11px;">__vcrt_trace_logging_provider::_TlgKeywordOn(__vcrt_trace_lo</div><div style="left:0px;top:150px;width:317px;height:17px;background:#e6fcfc"></div><svg style="position:absolute;left:3px;top:150px;" width="16" height="16" viewBox="0 0 16 16"><rect x="0.5" y="0.5" width="15" height="15" fill="#e8fcff" stroke="#2a70e0"/><rect x="0" y="0" width="16" height="3" fill="url(#tbar)"/><path d="M11.3 4.6c-.9-.7-2.1-.4-2.5.9L6.9 12.6c-.4 1.3-1.5 1.7-2.5 1.1M6.3 7.6h4.3" fill="none" stroke="#151515" stroke-width="1.05"/></svg><div class="t" style="left:25.3px;top:153.99px;font-size:11px;">__vcrt_trace_logging_provider::_TlgWrite(__vcrt_trace_logging</div><svg style="position:absolute;left:3px;top:167px;" width="16" height="16" viewBox="0 0 16 16"><rect x="0.5" y="0.5" width="15" height="15" fill="#e8fcff" stroke="#2a70e0"/><rect x="0" y="0" width="16" height="3" fill="url(#tbar)"/><path d="M11.3 4.6c-.9-.7-2.1-.4-2.5.9L6.9 12.6c-.4 1.3-1.5 1.7-2.5 1.1M6.3 7.6h4.3" fill="none" stroke="#151515" stroke-width="1.05"/></svg><div class="t" style="left:24.6px;top:170.99px;font-size:11px;;transform:scaleX(.93);transform-origin:0 0">sub_40125F</div><div style="left:0px;top:184px;width:317px;height:17px;background:#e6fcfc"></div><svg style="position:absolute;left:3px;top:184px;" width="16" height="16" viewBox="0 0 16 16"><rect x="0.5" y="0.5" width="15" height="15" fill="#e8fcff" stroke="#2a70e0"/><rect x="0" y="0" width="16" height="3" fill="url(#tbar)"/><path d="M11.3 4.6c-.9-.7-2.1-.4-2.5.9L6.9 12.6c-.4 1.3-1.5 1.7-2.5 1.1M6.3 7.6h4.3" fill="none" stroke="#151515" stroke-width="1.05"/></svg><div class="t" style="left:25.3px;top:187.99px;font-size:11px;">std::`dynamic initializer for &#x27;fin&#x27;&#x27;(void)</div><svg style="position:absolute;left:3px;top:201px;" width="16" height="16" viewBox="0 0 16 16"><rect x="0.5" y="0.5" width="15" height="15" fill="#e8fcff" stroke="#2a70e0"/><rect x="0" y="0" width="16" height="3" fill="url(#tbar)"/><path d="M11.3 4.6c-.9-.7-2.1-.4-2.5.9L6.9 12.6c-.4 1.3-1.5 1.7-2.5 1.1M6.3 7.6h4.3" fill="none" stroke="#151515" stroke-width="1.05"/></svg><div class="t" style="left:24.6px;top:204.99px;font-size:11px;;transform:scaleX(.93);transform-origin:0 0">sub_4012B8</div><svg style="position:absolute;left:3px;top:218px;" width="16" height="16" viewBox="0 0 16 16"><rect x="0.5" y="0.5" width="15" height="15" fill="#e8fcff" stroke="#2a70e0"/><rect x="0" y="0" width="16" height="3" fill="url(#tbar)"/><path d="M11.3 4.6c-.9-.7-2.1-.4-2.5.9L6.9 12.6c-.4 1.3-1.5 1.7-2.5 1.1M6.3 7.6h4.3" fill="none" stroke="#151515" stroke-width="1.05"/></svg><div class="t" style="left:24.6px;top:221.99px;font-size:11px;;transform:scaleX(.93);transform-origin:0 0">sub_4012D6</div><svg style="position:absolute;left:3px;top:235px;" width="16" height="16" viewBox="0 0 16 16"><rect x="0.5" y="0.5" width="15" height="15" fill="#e8fcff" stroke="#2a70e0"/><rect x="0" y="0" width="16" height="3" fill="url(#tbar)"/><path d="M11.3 4.6c-.9-.7-2.1-.4-2.5.9L6.9 12.6c-.4 1.3-1.5 1.7-2.5 1.1M6.3 7.6h4.3" fill="none" stroke="#151515" stroke-width="1.05"/></svg><div class="t" style="left:24.6px;top:238.99px;font-size:11px;;transform:scaleX(.93);transform-origin:0 0">sub_4012EC</div><svg style="position:absolute;left:3px;top:252px;" width="16" height="16" viewBox="0 0 16 16"><rect x="0.5" y="0.5" width="15" height="15" fill="#e8fcff" stroke="#2a70e0"/><rect x="0" y="0" width="16" height="3" fill="url(#tbar)"/><path d="M11.3 4.6c-.9-.7-2.1-.4-2.5.9L6.9 12.6c-.4 1.3-1.5 1.7-2.5 1.1M6.3 7.6h4.3" fill="none" stroke="#151515" stroke-width="1.05"/></svg><div class="t" style="left:24.6px;top:255.99px;font-size:11px;;transform:scaleX(.93);transform-origin:0 0">sub_401302</div><svg style="position:absolute;left:3px;top:269px;" width="16" height="16" viewBox="0 0 16 16"><rect x="0.5" y="0.5" width="15" height="15" fill="#e8fcff" stroke="#2a70e0"/><rect x="0" y="0" width="16" height="3" fill="url(#tbar)"/><path d="M11.3 4.6c-.9-.7-2.1-.4-2.5.9L6.9 12.6c-.4 1.3-1.5 1.7-2.5 1.1M6.3 7.6h4.3" fill="none" stroke="#151515" stroke-width="1.05"/></svg><div class="t" style="left:24.6px;top:272.99px;font-size:11px;;transform:scaleX(.93);transform-origin:0 0">sub_40130E</div><svg style="position:absolute;left:3px;top:286px;" width="16" height="16" viewBox="0 0 16 16"><rect x="0.5" y="0.5" width="15" height="15" fill="#e8fcff" stroke="#2a70e0"/><rect x="0" y="0" width="16" height="3" fill="url(#tbar)"/><path d="M11.3 4.6c-.9-.7-2.1-.4-2.5.9L6.9 12.6c-.4 1.3-1.5 1.7-2.5 1.1M6.3 7.6h4.3" fill="none" stroke="#151515" stroke-width="1.05"/></svg><div class="t" style="left:24.6px;top:289.99px;font-size:11px;;transform:scaleX(.93);transform-origin:0 0">sub_40131A</div><svg style="position:absolute;left:3px;top:303px;" width="16" height="16" viewBox="0 0 16 16"><rect x="0.5" y="0.5" width="15" height="15" fill="#e8fcff" stroke="#2a70e0"/><rect x="0" y="0" width="16" height="3" fill="url(#tbar)"/><path d="M11.3 4.6c-.9-.7-2.1-.4-2.5.9L6.9 12.6c-.4 1.3-1.5 1.7-2.5 1.1M6.3 7.6h4.3" fill="none" stroke="#151515" stroke-width="1.05"/></svg><div class="t" style="left:24.6px;top:306.99px;font-size:11px;;transform:scaleX(.93);transform-origin:0 0">sub_401326</div><svg style="position:absolute;left:3px;top:320px;" width="16" height="16" viewBox="0 0 16 16"><rect x="0.5" y="0.5" width="15" height="15" fill="#e8fcff" stroke="#2a70e0"/><rect x="0" y="0" width="16" height="3" fill="url(#tbar)"/><path d="M11.3 4.6c-.9-.7-2.1-.4-2.5.9L6.9 12.6c-.4 1.3-1.5 1.7-2.5 1.1M6.3 7.6h4.3" fill="none" stroke="#151515" stroke-width="1.05"/></svg><div class="t" style="left:24.6px;top:323.99px;font-size:11px;;transform:scaleX(.93);transform-origin:0 0">sub_401340</div><svg style="position:absolute;left:3px;top:337px;" width="16" height="16" viewBox="0 0 16 16"><rect x="0.5" y="0.5" width="15" height="15" fill="#e8fcff" stroke="#2a70e0"/><rect x="0" y="0" width="16" height="3" fill="url(#tbar)"/><path d="M11.3 4.6c-.9-.7-2.1-.4-2.5.9L6.9 12.6c-.4 1.3-1.5 1.7-2.5 1.1M6.3 7.6h4.3" fill="none" stroke="#151515" stroke-width="1.05"/></svg><div class="t" style="left:24.6px;top:340.99px;font-size:11px;;transform:scaleX(.93);transform-origin:0 0">sub_4013B0</div><svg style="position:absolute;left:3px;top:354px;" width="16" height="16" viewBox="0 0 16 16"><rect x="0.5" y="0.5" width="15" height="15" fill="#e8fcff" stroke="#2a70e0"/><rect x="0" y="0" width="16" height="3" fill="url(#tbar)"/><path d="M11.3 4.6c-.9-.7-2.1-.4-2.5.9L6.9 12.6c-.4 1.3-1.5 1.7-2.5 1.1M6.3 7.6h4.3" fill="none" stroke="#151515" stroke-width="1.05"/></svg><div class="t" style="left:25.3px;top:357.48px;font-size:11.6px;font-weight:bold">_main</div><svg style="position:absolute;left:3px;top:371px;" width="16" height="16" viewBox="0 0 16 16"><rect x="0.5" y="0.5" width="15" height="15" fill="#e8fcff" stroke="#2a70e0"/><rect x="0" y="0" width="16" height="3" fill="url(#tbar)"/><path d="M11.3 4.6c-.9-.7-2.1-.4-2.5.9L6.9 12.6c-.4 1.3-1.5 1.7-2.5 1.1M6.3 7.6h4.3" fill="none" stroke="#151515" stroke-width="1.05"/></svg><div class="t" style="left:24.6px;top:374.99px;font-size:11px;;transform:scaleX(.93);transform-origin:0 0">sub_4015F0</div><svg style="position:absolute;left:3px;top:388px;" width="16" height="16" viewBox="0 0 16 16"><rect x="0.5" y="0.5" width="15" height="15" fill="#e8fcff" stroke="#2a70e0"/><rect x="0" y="0" width="16" height="3" fill="url(#tbar)"/><path d="M11.3 4.6c-.9-.7-2.1-.4-2.5.9L6.9 12.6c-.4 1.3-1.5 1.7-2.5 1.1M6.3 7.6h4.3" fill="none" stroke="#151515" stroke-width="1.05"/></svg><div class="t" style="left:24.6px;top:391.99px;font-size:11px;;transform:scaleX(.93);transform-origin:0 0">sub_401670</div><svg style="position:absolute;left:3px;top:405px;" width="16" height="16" viewBox="0 0 16 16"><rect x="0.5" y="0.5" width="15" height="15" fill="#e8fcff" stroke="#2a70e0"/><rect x="0" y="0" width="16" height="3" fill="url(#tbar)"/><path d="M11.3 4.6c-.9-.7-2.1-.4-2.5.9L6.9 12.6c-.4 1.3-1.5 1.7-2.5 1.1M6.3 7.6h4.3" fill="none" stroke="#151515" stroke-width="1.05"/></svg><div class="t" style="left:24.6px;top:408.99px;font-size:11px;;transform:scaleX(.93);transform-origin:0 0">sub_401680</div><svg style="position:absolute;left:3px;top:422px;" width="16" height="16" viewBox="0 0 16 16"><rect x="0.5" y="0.5" width="15" height="15" fill="#e8fcff" stroke="#2a70e0"/><rect x="0" y="0" width="16" height="3" fill="url(#tbar)"/><path d="M11.3 4.6c-.9-.7-2.1-.4-2.5.9L6.9 12.6c-.4 1.3-1.5 1.7-2.5 1.1M6.3 7.6h4.3" fill="none" stroke="#151515" stroke-width="1.05"/></svg><div class="t" style="left:24.6px;top:425.99px;font-size:11px;;transform:scaleX(.93);transform-origin:0 0">sub_401700</div><svg style="position:absolute;left:3px;top:439px;" width="16" height="16" viewBox="0 0 16 16"><rect x="0.5" y="0.5" width="15" height="15" fill="#e8fcff" stroke="#2a70e0"/><rect x="0" y="0" width="16" height="3" fill="url(#tbar)"/><path d="M11.3 4.6c-.9-.7-2.1-.4-2.5.9L6.9 12.6c-.4 1.3-1.5 1.7-2.5 1.1M6.3 7.6h4.3" fill="none" stroke="#151515" stroke-width="1.05"/></svg><div class="t" style="left:24.6px;top:442.99px;font-size:11px;;transform:scaleX(.93);transform-origin:0 0">sub_401830</div><svg style="position:absolute;left:3px;top:456px;" width="16" height="16" viewBox="0 0 16 16"><rect x="0.5" y="0.5" width="15" height="15" fill="#e8fcff" stroke="#2a70e0"/><rect x="0" y="0" width="16" height="3" fill="url(#tbar)"/><path d="M11.3 4.6c-.9-.7-2.1-.4-2.5.9L6.9 12.6c-.4 1.3-1.5 1.7-2.5 1.1M6.3 7.6h4.3" fill="none" stroke="#151515" stroke-width="1.05"/></svg><div class="t" style="left:24.6px;top:459.99px;font-size:11px;;transform:scaleX(.93);transform-origin:0 0">sub_4018A0</div><svg style="position:absolute;left:3px;top:473px;" width="16" height="16" viewBox="0 0 16 16"><rect x="0.5" y="0.5" width="15" height="15" fill="#e8fcff" stroke="#2a70e0"/><rect x="0" y="0" width="16" height="3" fill="url(#tbar)"/><path d="M11.3 4.6c-.9-.7-2.1-.4-2.5.9L6.9 12.6c-.4 1.3-1.5 1.7-2.5 1.1M6.3 7.6h4.3" fill="none" stroke="#151515" stroke-width="1.05"/></svg><div class="t" style="left:24.6px;top:476.99px;font-size:11px;;transform:scaleX(.93);transform-origin:0 0">sub_401900</div><svg style="position:absolute;left:3px;top:490px;" width="16" height="16" viewBox="0 0 16 16"><rect x="0.5" y="0.5" width="15" height="15" fill="#e8fcff" stroke="#2a70e0"/><rect x="0" y="0" width="16" height="3" fill="url(#tbar)"/><path d="M11.3 4.6c-.9-.7-2.1-.4-2.5.9L6.9 12.6c-.4 1.3-1.5 1.7-2.5 1.1M6.3 7.6h4.3" fill="none" stroke="#151515" stroke-width="1.05"/></svg><div class="t" style="left:24.6px;top:493.99px;font-size:11px;;transform:scaleX(.93);transform-origin:0 0">sub_401A00</div><svg style="position:absolute;left:3px;top:507px;" width="16" height="16" viewBox="0 0 16 16"><rect x="0.5" y="0.5" width="15" height="15" fill="#e8fcff" stroke="#2a70e0"/><rect x="0" y="0" width="16" height="3" fill="url(#tbar)"/><path d="M11.3 4.6c-.9-.7-2.1-.4-2.5.9L6.9 12.6c-.4 1.3-1.5 1.7-2.5 1.1M6.3 7.6h4.3" fill="none" stroke="#151515" stroke-width="1.05"/></svg><div class="t" style="left:24.6px;top:510.99px;font-size:11px;;transform:scaleX(.93);transform-origin:0 0">sub_401B20</div><svg style="position:absolute;left:3px;top:524px;" width="16" height="16" viewBox="0 0 16 16"><rect x="0.5" y="0.5" width="15" height="15" fill="#e8fcff" stroke="#2a70e0"/><rect x="0" y="0" width="16" height="3" fill="url(#tbar)"/><path d="M11.3 4.6c-.9-.7-2.1-.4-2.5.9L6.9 12.6c-.4 1.3-1.5 1.7-2.5 1.1M6.3 7.6h4.3" fill="none" stroke="#151515" stroke-width="1.05"/></svg><div class="t" style="left:24.6px;top:527.99px;font-size:11px;;transform:scaleX(.93);transform-origin:0 0">sub_401C30</div><svg style="position:absolute;left:3px;top:541px;" width="16" height="16" viewBox="0 0 16 16"><rect x="0.5" y="0.5" width="15" height="15" fill="#e8fcff" stroke="#2a70e0"/><rect x="0" y="0" width="16" height="3" fill="url(#tbar)"/><path d="M11.3 4.6c-.9-.7-2.1-.4-2.5.9L6.9 12.6c-.4 1.3-1.5 1.7-2.5 1.1M6.3 7.6h4.3" fill="none" stroke="#151515" stroke-width="1.05"/></svg><div class="t" style="left:24.6px;top:544.99px;font-size:11px;;transform:scaleX(.93);transform-origin:0 0">sub_401DF0</div><svg style="position:absolute;left:3px;top:558px;" width="16" height="16" viewBox="0 0 16 16"><rect x="0.5" y="0.5" width="15" height="15" fill="#e8fcff" stroke="#2a70e0"/><rect x="0" y="0" width="16" height="3" fill="url(#tbar)"/><path d="M11.3 4.6c-.9-.7-2.1-.4-2.5.9L6.9 12.6c-.4 1.3-1.5 1.7-2.5 1.1M6.3 7.6h4.3" fill="none" stroke="#151515" stroke-width="1.05"/></svg><div class="t" style="left:24.6px;top:561.99px;font-size:11px;;transform:scaleX(.93);transform-origin:0 0">sub_401EA0</div><svg style="position:absolute;left:3px;top:575px;" width="16" height="16" viewBox="0 0 16 16"><rect x="0.5" y="0.5" width="15" height="15" fill="#e8fcff" stroke="#2a70e0"/><rect x="0" y="0" width="16" height="3" fill="url(#tbar)"/><path d="M11.3 4.6c-.9-.7-2.1-.4-2.5.9L6.9 12.6c-.4 1.3-1.5 1.7-2.5 1.1M6.3 7.6h4.3" fill="none" stroke="#151515" stroke-width="1.05"/></svg><div class="t" style="left:24.6px;top:578.99px;font-size:11px;;transform:scaleX(.93);transform-origin:0 0">sub_401F05</div><svg style="position:absolute;left:3px;top:592px;" width="16" height="16" viewBox="0 0 16 16"><rect x="0.5" y="0.5" width="15" height="15" fill="#e8fcff" stroke="#2a70e0"/><rect x="0" y="0" width="16" height="3" fill="url(#tbar)"/><path d="M11.3 4.6c-.9-.7-2.1-.4-2.5.9L6.9 12.6c-.4 1.3-1.5 1.7-2.5 1.1M6.3 7.6h4.3" fill="none" stroke="#151515" stroke-width="1.05"/></svg><div class="t" style="left:24.6px;top:595.99px;font-size:11px;;transform:scaleX(.93);transform-origin:0 0">sub_401F26</div></div><div style="left:318px;top:159px;width:16px;height:607px;background:#f0f0f0"></div><svg style="position:absolute;left:322px;top:164px;" width="8" height="7" viewBox="0 0 8 7"><path d="M0.8 5.6L4 2.2 7.2 5.6" fill="none" stroke="#505050" stroke-width="2"/></svg><div style="left:319px;top:176px;width:14px;height:20px;background:#cdcdcd"></div><svg style="position:absolute;left:322px;top:754px;" width="8" height="7" viewBox="0 0 8 7"><path d="M0.8 1.4L4 4.8 7.2 1.4" fill="none" stroke="#505050" stroke-width="2"/></svg><div style="left:1px;top:766px;width:317px;height:16px;background:#f0f0f0"></div><svg style="position:absolute;left:6px;top:770px;" width="7" height="8" viewBox="0 0 7 8"><path d="M5.6 0.8L2.2 4 5.6 7.2" fill="none" stroke="#505050" stroke-width="2"/></svg><div style="left:18px;top:767px;width:87px;height:14px;background:#cdcdcd"></div><svg style="position:absolute;left:306px;top:770px;" width="7" height="8" viewBox="0 0 7 8"><path d="M1.4 0.8L4.8 4 1.4 7.2" fill="none" stroke="#505050" stroke-width="2"/></svg><div style="left:318px;top:766px;width:16px;height:16px;background:#f0f0f0"></div><div class="t" style="left:6.6px;top:789.73px;font-size:16.5px;">Line 3 of 845</div><div style="left:339px;top:130px;width:170px;height:24px;background:#fff;border:1px solid #d9d9d9;border-bottom:none"></div><svg style="position:absolute;left:351px;top:133px;" width="16" height="16" viewBox="0 0 16 16"><rect x="0.5" y="0.5" width="13" height="13" fill="#eaffff" stroke="#2a70e0"/><rect x="0" y="0" width="14" height="3" fill="url(#tbar)"/><rect x="5.5" y="3.5" width="10" height="12" fill="#fff" stroke="#1a4a88"/><path d="M7 5.5h3M9 7.5h4.5M9 9.5h4.5M7 11.5h3M9 13.5h4.5" stroke="#404850" stroke-width="1"/></svg><div class="t" style="left:395.8px;top:138.49px;font-size:11px;">IDA View-A</div><svg style="position:absolute;left:479px;top:135px;" width="14" height="14" viewBox="0 0 14 14"><rect x="0.5" y="0.5" width="13" height="13" rx="2" fill="#e05a40" stroke="#c04030"/><path d="M4 4l6 6M10 4l-6 6" stroke="#fff" stroke-width="1.8"/></svg><div style="left:508px;top:132px;width:165px;height:22px;background:#f0f0f0;border-top:1px solid #d9d9d9;border-right:1px solid #d9d9d9;border-bottom:1px solid #d4ccc4"></div><svg style="position:absolute;left:519px;top:133px;" width="16" height="16" viewBox="0 0 16 16"><rect x="0.5" y="1.5" width="15" height="14" fill="#eaffff" stroke="#2a6ad8"/><rect x="0" y="1" width="16" height="3" fill="url(#tbar)"/><text x="1.2" y="14.5" font-family="Liberation Serif" font-weight="bold" font-size="12" fill="#108010">‘s’</text></svg><div class="t" style="left:553px;top:138.99px;font-size:11px;">Strings window</div><svg style="position:absolute;left:646px;top:136px;" width="14" height="14" viewBox="0 0 14 14"><rect x="0.5" y="0.5" width="13" height="13" rx="2" fill="#c8c8c8" stroke="#b0b0b0"/><path d="M4 4l6 6M10 4l-6 6" stroke="#fff" stroke-width="1.8"/></svg><div style="left:673px;top:132px;width:168px;height:22px;background:#f0f0f0;border-top:1px solid #d9d9d9;border-right:1px solid #d9d9d9;border-bottom:1px solid #d4ccc4"></div><svg style="position:absolute;left:686px;top:133px;" width="16" height="16" viewBox="0 0 16 16"><rect x="0.5" y="1.5" width="15" height="14" fill="#eaffff" stroke="#2a6ad8"/><rect x="0" y="1" width="16" height="3" fill="url(#tbar)"/><path d="M8 5.5l3.5 2v4l-3.5 2-3.5-2v-4z" fill="none" stroke="#3050e0" stroke-width="1.2"/></svg><div class="t" style="left:730px;top:138.99px;font-size:11px;">Hex View-1</div><svg style="position:absolute;left:814px;top:136px;" width="14" height="14" viewBox="0 0 14 14"><rect x="0.5" y="0.5" width="13" height="13" rx="2" fill="#c8c8c8" stroke="#b0b0b0"/><path d="M4 4l6 6M10 4l-6 6" stroke="#fff" stroke-width="1.8"/></svg><div style="left:841px;top:132px;width:169px;height:22px;background:#f0f0f0;border-top:1px solid #d9d9d9;border-right:1px solid #d9d9d9;border-bottom:1px solid #d4ccc4"></div><svg style="position:absolute;left:854px;top:133px;" width="16" height="16" viewBox="0 0 16 16"><rect x="0.5" y="1.5" width="15" height="14" fill="#eaffff" stroke="#2a6ad8"/><rect x="0" y="1" width="16" height="3" fill="url(#tbar)"/><path d="M5 14.5L8 5l3 9.5M6 11.5h4" fill="none" stroke="#1a3a90" stroke-width="1.4"/><circle cx="8" cy="5.5" r="1" fill="#1a3a90"/></svg><div class="t" style="left:899px;top:138.99px;font-size:11px;">Structures</div><svg style="position:absolute;left:982px;top:136px;" width="14" height="14" viewBox="0 0 14 14"><rect x="0.5" y="0.5" width="13" height="13" rx="2" fill="#c8c8c8" stroke="#b0b0b0"/><path d="M4 4l6 6M10 4l-6 6" stroke="#fff" stroke-width="1.8"/></svg><div style="left:1010px;top:132px;width:167px;height:22px;background:#f0f0f0;border-top:1px solid #d9d9d9;border-right:1px solid #d9d9d9;border-bottom:1px solid #d4ccc4"></div><svg style="position:absolute;left:1022px;top:133px;" width="16" height="16" viewBox="0 0 16 16"><rect x="0.5" y="1.5" width="15" height="14" fill="#eaffff" stroke="#2a6ad8"/><rect x="0" y="1" width="16" height="3" fill="url(#tbar)"/><path d="M5 5.8l1.5 1.5L5 8.8 3.5 7.3zM5 9.8l1.5 1.5L5 12.8 3.5 11.3zM5 13.3l1.3 1.2-1.3 1.2-1.3-1.2z" fill="#20e0f0" stroke="#0a1a80" stroke-width=".8"/><path d="M8 7.3h3M8 11.3h3M8 14.5h3" stroke="#0a50c0" stroke-width="1.2"/></svg><div class="t" style="left:1077.3px;top:138.99px;font-size:11px;">Enums</div><svg style="position:absolute;left:1149px;top:136px;" width="14" height="14" viewBox="0 0 14 14"><rect x="0.5" y="0.5" width="13" height="13" rx="2" fill="#c8c8c8" stroke="#b0b0b0"/><path d="M4 4l6 6M10 4l-6 6" stroke="#fff" stroke-width="1.8"/></svg><div style="left:1177px;top:132px;width:168px;height:22px;background:#f0f0f0;border-top:1px solid #d9d9d9;border-right:1px solid #d9d9d9;border-bottom:1px solid #d4ccc4"></div><svg style="position:absolute;left:1189px;top:133px;" width="16" height="16" viewBox="0 0 16 16"><rect x="0.5" y="1.5" width="14" height="13" fill="#eaffff" stroke="#2a6ad8"/><rect x="0" y="1" width="15" height="3" fill="url(#tbar)"/><rect x="6.5" y="5.5" width="9" height="10" fill="#fff" stroke="#1a4a88"/><path d="M8.5 8.5h5M8.5 10.5h5M8.5 12.5h5M8.5 14h5" stroke="#0a0a90" stroke-width="1"/><path d="M1 6l3 2V6.5l3 3-3 3V11L1 12z" fill="#30d030" stroke="#0a400a" stroke-width=".8"/></svg><div class="t" style="left:1241px;top:138.99px;font-size:11px;">Imports</div><svg style="position:absolute;left:1317px;top:136px;" width="14" height="14" viewBox="0 0 14 14"><rect x="0.5" y="0.5" width="13" height="13" rx="2" fill="#c8c8c8" stroke="#b0b0b0"/><path d="M4 4l6 6M10 4l-6 6" stroke="#fff" stroke-width="1.8"/></svg><div style="left:1345px;top:132px;width:165px;height:22px;background:#f0f0f0;border-top:1px solid #d9d9d9;border-right:1px solid #d9d9d9;border-bottom:1px solid #d4ccc4"></div><svg style="position:absolute;left:1357px;top:133px;" width="16" height="16" viewBox="0 0 16 16"><rect x="0.5" y="1.5" width="14" height="13" fill="#eaffff" stroke="#2a6ad8"/><rect x="0" y="1" width="15" height="3" fill="url(#tbar)"/><rect x="1.5" y="5.5" width="9" height="10" fill="#fff" stroke="#1a4a88"/><path d="M3.5 8.5h5M3.5 10.5h5M3.5 12.5h5" stroke="#0a0a90" stroke-width="1"/><path d="M8 6h3V4l4 3.5-4 3.5V9H8z" fill="#30d030" stroke="#0a400a" stroke-width=".8"/></svg><div class="t" style="left:1409px;top:138.99px;font-size:11px;">Exports</div><svg style="position:absolute;left:1484px;top:136px;" width="14" height="14" viewBox="0 0 14 14"><rect x="0.5" y="0.5" width="13" height="13" rx="2" fill="#c8c8c8" stroke="#b0b0b0"/><path d="M4 4l6 6M10 4l-6 6" stroke="#fff" stroke-width="1.8"/></svg><div style="left:1510px;top:153px;width:170px;height:1px;background:#d4ccc4"></div><div style="left:339px;top:154px;width:75px;height:657px;background:#fff"></div><div style="left:414px;top:154px;width:3px;height:657px;background:#f0f0f0"></div><div style="left:417px;top:154px;width:1px;height:657px;background:#fff"></div><div style="left:418px;top:154px;width:1262px;height:657px;border:1px solid #0078d7;background:#fff"></div><svg style="position:absolute;left:404px;top:155px;" width="6" height="630" viewBox="0 0 6 630"><circle cx="3" cy="18" r="3" fill="#5ccfff"/><circle cx="3" cy="33" r="3" fill="#5ccfff"/><circle cx="3" cy="48" r="3" fill="#5ccfff"/><circle cx="3" cy="63" r="3" fill="#5ccfff"/><circle cx="3" cy="78" r="3" fill="#5ccfff"/><circle cx="3" cy="93" r="3" fill="#5ccfff"/><circle cx="3" cy="108" r="3" fill="#5ccfff"/><circle cx="3" cy="123" r="3" fill="#5ccfff"/><circle cx="3" cy="138" r="3" fill="#5ccfff"/><circle cx="3" cy="153" r="3" fill="#5ccfff"/><circle cx="3" cy="168" r="3" fill="#5ccfff"/><circle cx="3" cy="183" r="3" fill="#5ccfff"/><circle cx="3" cy="198" r="3" fill="#5ccfff"/><circle cx="3" cy="213" r="3" fill="#5ccfff"/><circle cx="3" cy="228" r="3" fill="#5ccfff"/><circle cx="3" cy="243" r="3" fill="#5ccfff"/><circle cx="3" cy="258" r="3" fill="#5ccfff"/><circle cx="3" cy="273" r="3" fill="#5ccfff"/><circle cx="3" cy="288" r="3" fill="#5ccfff"/><circle cx="3" cy="303" r="3" fill="#5ccfff"/><circle cx="3" cy="318" r="3" fill="#5ccfff"/><circle cx="3" cy="333" r="3" fill="#5ccfff"/><circle cx="3" cy="348" r="3" fill="#5ccfff"/><circle cx="3" cy="363" r="3" fill="#5ccfff"/><circle cx="3" cy="378" r="3" fill="#5ccfff"/><circle cx="3" cy="393" r="3" fill="#5ccfff"/><circle cx="3" cy="408" r="3" fill="#5ccfff"/><circle cx="3" cy="423" r="3" fill="#5ccfff"/><circle cx="3" cy="438" r="3" fill="#5ccfff"/><circle cx="3" cy="453" r="3" fill="#5ccfff"/><circle cx="3" cy="468" r="3" fill="#5ccfff"/><circle cx="3" cy="483" r="3" fill="#5ccfff"/><circle cx="3" cy="498" r="3" fill="#5ccfff"/><circle cx="3" cy="513" r="3" fill="#5ccfff"/><circle cx="3" cy="528" r="3" fill="#5ccfff"/><circle cx="3" cy="543" r="3" fill="#5ccfff"/><circle cx="3" cy="558" r="3" fill="#5ccfff"/><circle cx="3" cy="573" r="3" fill="#5ccfff"/><circle cx="3" cy="588" r="3" fill="#5ccfff"/><circle cx="3" cy="603" r="3" fill="#5ccfff"/><circle cx="3" cy="618" r="3" fill="#5ccfff"/></svg><div style="left:419px;top:260px;width:1243px;height:15px;background:#e4e4e4"></div><div style="left:713px;top:260px;width:49px;height:15px;background:#e8e800"></div><div class="m" style="left:419px;top:155px;width:1244px;height:630px;overflow:hidden;padding-top:2px;-webkit-text-stroke-width:0.2px"><span style="color:#808080">.rdata:00420328</span>                                         <span style="color:#808080">; &quot;Sun&quot;</span>
<span style="color:#808080">.rdata:0042032C</span>                 <span style="color:#000080">dd offset aMon</span>          <span style="color:#808080">; &quot;Mon&quot;</span>
<span style="color:#808080">.rdata:00420330</span>                 <span style="color:#000080">dd offset aTue</span>          <span style="color:#808080">; &quot;Tue&quot;</span>
<span style="color:#808080">.rdata:00420334</span>                 <span style="color:#000080">dd offset aWed</span>          <span style="color:#808080">; &quot;Wed&quot;</span>
<span style="color:#808080">.rdata:00420338</span>                 <span style="color:#000080">dd offset aThu</span>          <span style="color:#808080">; &quot;Thu&quot;</span>
<span style="color:#808080">.rdata:0042033C</span>                 <span style="color:#000080">dd offset aFri</span>          <span style="color:#808080">; &quot;Fri&quot;</span>
<span style="color:#808080">.rdata:00420340</span>                 <span style="color:#000080">dd offset aSat</span>          <span style="color:#808080">; &quot;Sat&quot;</span>
<span style="color:#0000ff">.rdata:00420344</span>                 <span style="color:#000080">dd offset aSunday</span>       <span style="color:#808080">; &quot;Sunday&quot;</span>
<span style="color:#808080">.rdata:00420348</span>                 <span style="color:#000080">dd offset aMonday</span>       <span style="color:#808080">; &quot;Monday&quot;</span>
<span style="color:#808080">.rdata:0042034C</span>                 <span style="color:#000080">dd offset aTuesday</span>      <span style="color:#808080">; &quot;Tuesday&quot;</span>
<span style="color:#808080">.rdata:00420350</span>                 <span style="color:#000080">dd offset aWednesday</span>    <span style="color:#808080">; &quot;Wednesday&quot;</span>
<span style="color:#808080">.rdata:00420354</span>                 <span style="color:#000080">dd offset aThursday</span>     <span style="color:#808080">; &quot;Thursday&quot;</span>
<span style="color:#808080">.rdata:00420358</span>                 <span style="color:#000080">dd offset aFriday</span>       <span style="color:#808080">; &quot;Friday&quot;</span>
<span style="color:#808080">.rdata:0042035C</span>                 <span style="color:#000080">dd offset aSaturday</span>     <span style="color:#808080">; &quot;Saturday&quot;</span>
<span style="color:#808080">.rdata:00420360</span>                 <span style="color:#000080">dd offset aJan</span>          <span style="color:#808080">; &quot;Jan&quot;</span>
<span style="color:#808080">.rdata:00420364</span>                 <span style="color:#000080">dd offset aFeb</span>          <span style="color:#808080">; &quot;Feb&quot;</span>
<span style="color:#808080">.rdata:00420368</span>                 <span style="color:#000080">dd offset aMar</span>          <span style="color:#808080">; &quot;Mar&quot;</span>
<span style="color:#808080">.rdata:0042036C</span>                 <span style="color:#000080">dd offset aApr</span>          <span style="color:#808080">; &quot;Apr&quot;</span>
<span style="color:#808080">.rdata:00420370</span>                 <span style="color:#000080">dd offset aMay</span>          <span style="color:#808080">; &quot;May&quot;</span>
<span style="color:#808080">.rdata:00420374</span>                 <span style="color:#000080">dd offset aJun</span>          <span style="color:#808080">; &quot;Jun&quot;</span>
<span style="color:#808080">.rdata:00420378</span>                 <span style="color:#000080">dd offset aJul</span>          <span style="color:#808080">; &quot;Jul&quot;</span>
<span style="color:#808080">.rdata:0042037C</span>                 <span style="color:#000080">dd offset aAug</span>          <span style="color:#808080">; &quot;Aug&quot;</span>
<span style="color:#808080">.rdata:00420380</span>                 <span style="color:#000080">dd offset aSep</span>          <span style="color:#808080">; &quot;Sep&quot;</span>
<span style="color:#808080">.rdata:00420384</span>                 <span style="color:#000080">dd offset aOct</span>          <span style="color:#808080">; &quot;Oct&quot;</span>
<span style="color:#808080">.rdata:00420388</span>                 <span style="color:#000080">dd offset aNov</span>          <span style="color:#808080">; &quot;Nov&quot;</span>
<span style="color:#808080">.rdata:0042038C</span>                 <span style="color:#000080">dd offset aDec</span>          <span style="color:#808080">; &quot;Dec&quot;</span>
<span style="color:#808080">.rdata:00420390</span>                 <span style="color:#000080">dd offset aJanuary</span>      <span style="color:#808080">; &quot;January&quot;</span>
<span style="color:#808080">.rdata:00420394</span>                 <span style="color:#000080">dd offset aFebruary</span>     <span style="color:#808080">; &quot;February&quot;</span>
<span style="color:#808080">.rdata:00420398</span>                 <span style="color:#000080">dd offset aMarch</span>        <span style="color:#808080">; &quot;March&quot;</span>
<span style="color:#808080">.rdata:0042039C</span>                 <span style="color:#000080">dd offset aApril</span>        <span style="color:#808080">; &quot;April&quot;</span>
<span style="color:#808080">.rdata:004203A0</span>                 <span style="color:#000080">dd offset aMay</span>          <span style="color:#808080">; &quot;May&quot;</span>
<span style="color:#808080">.rdata:004203A4</span>                 <span style="color:#000080">dd offset aJune</span>         <span style="color:#808080">; &quot;June&quot;</span>
<span style="color:#808080">.rdata:004203A8</span>                 <span style="color:#000080">dd offset aJuly</span>         <span style="color:#808080">; &quot;July&quot;</span>
<span style="color:#808080">.rdata:004203AC</span>                 <span style="color:#000080">dd offset aAugust</span>       <span style="color:#808080">; &quot;August&quot;</span>
<span style="color:#808080">.rdata:004203B0</span>                 <span style="color:#000080">dd offset aSeptember</span>    <span style="color:#808080">; &quot;September&quot;</span>
<span style="color:#808080">.rdata:004203B4</span>                 <span style="color:#000080">dd offset aOctober</span>      <span style="color:#808080">; &quot;October&quot;</span>
<span style="color:#808080">.rdata:004203B8</span>                 <span style="color:#000080">dd offset aNovember</span>     <span style="color:#808080">; &quot;November&quot;</span>
<span style="color:#808080">.rdata:004203BC</span>                 <span style="color:#000080">dd offset aDecember</span>     <span style="color:#808080">; &quot;December&quot;</span>
<span style="color:#808080">.rdata:004203C0</span>                 <span style="color:#000080">dd offset aAm</span>           <span style="color:#808080">; &quot;AM&quot;</span>
<span style="color:#808080">.rdata:004203C4</span>                 <span style="color:#000080">dd offset aPm</span>           <span style="color:#808080">; &quot;PM&quot;</span>
<span style="color:#808080">.rdata:004203C8</span>                 <span style="color:#000080">dd offset aMmDdYy</span>       <span style="color:#808080">; &quot;MM/dd/yy&quot;</span>
<span style="color:#808080">.rdata:004203CC</span>                 <span style="color:#000080">dd offset aDdddMmmmDdYyyy</span> <span style="color:#808080">; &quot;dddd, MMMM dd, yyyy&quot;</span></div><div style="left:726px;top:260px;width:2px;height:14px;background:#000"></div><div style="left:1663px;top:155px;width:16px;height:655px;background:#f0f0f0"></div><svg style="position:absolute;left:1667px;top:161px;" width="8" height="7" viewBox="0 0 8 7"><path d="M0.8 5.6L4 2.2 7.2 5.6" fill="none" stroke="#505050" stroke-width="2"/></svg><div style="left:1664px;top:642px;width:14px;height:18px;background:#cdcdcd"></div><svg style="position:absolute;left:1667px;top:799px;" width="8" height="7" viewBox="0 0 8 7"><path d="M0.8 1.4L4 4.8 7.2 1.4" fill="none" stroke="#505050" stroke-width="2"/></svg><div style="left:419px;top:785px;width:1244px;height:25px;background:#f0f0f0"></div><div style="left:478px;top:787px;width:1px;height:20px;background:#c8c8c8"></div><div style="left:716px;top:787px;width:1px;height:20px;background:#c8c8c8"></div><div style="left:931px;top:787px;width:1px;height:20px;background:#c8c8c8"></div><div class="m" style="left:421px;top:792px;color:#000;font-size:11.67px;line-height:15px">0001F544</div><div class="m" style="left:483.5px;top:792px;color:#000;font-size:11.67px;line-height:15px">0000000000420344: .rdata:00420344</div><div class="m" style="left:721px;top:792px;color:#000;font-size:11.67px;line-height:15px">(Synchronized with Hex View-1)</div><div style="left:0px;top:815px;width:1680px;height:26px;border:1px solid #a0a0a0;background:#f0f0f0"></div><svg style="position:absolute;left:4px;top:820px;" width="14" height="16" viewBox="0 0 14 16"><rect x="0.5" y="0.5" width="13" height="15" fill="#f4f8ff" stroke="#3a5a8a"/><rect x="1" y="1" width="12" height="2" fill="#2a7ae0"/><path d="M3 6h8M3 8.5h8M3 11h8M3 13.5h8" stroke="#3a5a8a"/></svg><div class="t" style="left:24.8px;top:823.54px;font-size:10.7px;">Output window</div><svg style="position:absolute;left:1610px;top:825px;shape-rendering:crispEdges" width="9" height="9" viewBox="0 0 9 9"><path d="M0 0H9V9H0z M1 2H8V8H1z" fill="#000" fill-rule="evenodd"/></svg><svg style="position:absolute;left:1637px;top:825px;shape-rendering:crispEdges" width="8" height="9" viewBox="0 0 8 9"><path d="M3 0H8V6H6V5H7V2H4V3H3z" fill="#000"/><path d="M0 3H5V9H0z M1 5H4V8H1z" fill="#000" fill-rule="evenodd"/></svg><svg style="position:absolute;left:1663px;top:826px;" width="8" height="7" viewBox="0 0 8 7"><path d="M0.6 0.4L7.4 6.6M7.4 0.4L0.6 6.6" stroke="#000" stroke-width="1.7"/></svg><div style="left:0px;top:843px;width:1680px;height:116px;border:1px solid #828790;background:#fff"></div><div class="m" style="left:7px;top:844px;width:1650px;height:114px;overflow:hidden"><div class="m" style="position:relative;top:-4px;-webkit-text-stroke:0.25px #000">Command &quot;JumpOpXref&quot; failed
Search completed. Found at 0000000000401411.
Search completed. Found at 0000000000401413.
Search completed. Found at 0000000000401415.
Command &quot;JumpOpXref&quot; failed
Command &quot;JumpOpXref&quot; failed
Command &quot;JumpOpXref&quot; failed
Command &quot;JumpOpXref&quot; failed</div></div><div style="left:1663px;top:844px;width:16px;height:114px;background:#f0f0f0"></div><svg style="position:absolute;left:1667px;top:850px;" width="8" height="7" viewBox="0 0 8 7"><path d="M0.8 5.6L4 2.2 7.2 5.6" fill="none" stroke="#505050" stroke-width="2"/></svg><div style="left:1664px;top:923px;width:14px;height:18px;background:#cdcdcd"></div><svg style="position:absolute;left:1667px;top:947px;" width="8" height="7" viewBox="0 0 8 7"><path d="M0.8 1.4L4 4.8 7.2 1.4" fill="none" stroke="#505050" stroke-width="2"/></svg><div class="t" style="left:1255.3px;top:899.57px;font-size:20px;color:#c8c8c8">Активация Windows</div><div class="t" style="left:1255px;top:924.50px;font-size:15px;color:#c8c8c8">Чтобы активировать Windows, перейдите в раздел</div><div style="left:1240px;top:940px;width:400px;height:18px;overflow:hidden"><div class="t" style="left:15px;top:4.30px;font-size:15px;color:#c8c8c8">&quot;Параметры&quot;.</div></div><div style="left:2px;top:961px;width:46px;height:22px;background:#e1e1e1;border:1px solid #adadad"></div><div class="t" style="left:7.2px;top:968.19px;font-size:11px;">Python</div><div style="left:52px;top:960px;width:1627px;height:24px;background:#fff;border:1px solid #7a7a7a"></div><div class="m" style="left:2px;top:989px;font-size:16.67px;line-height:20px;color:#000">AU:  idle</div><div class="m" style="left:119px;top:989px;font-size:16.67px;line-height:20px;color:#000">Down</div><div class="m" style="left:195px;top:989px;font-size:16.67px;line-height:20px;color:#000">Disk: 65GB</div><div style="left:113px;top:988px;width:1px;height:20px;background:#d0d0d0"></div><div style="left:189px;top:988px;width:1px;height:20px;background:#d0d0d0"></div><div style="left:295px;top:988px;width:1px;height:20px;background:#d0d0d0"></div><div style="left:0px;top:1010px;width:1680px;height:40px;background:#101010"></div><svg style="position:absolute;left:16px;top:1022px;" width="17" height="17" viewBox="0 0 17 17"><path d="M0 2.3L6.8 1.4V7.8H0zM7.7 1.3L16.5 0V7.8H7.7zM0 8.7H6.8V15.1L0 14.2zM7.7 8.7H16.5V16.5L7.7 15.2z" fill="#fff"/></svg><div style="left:48px;top:1010px;width:344px;height:40px;background:#3f3f3f"></div><svg style="position:absolute;left:59px;top:1022px;" width="18" height="18" viewBox="0 0 18 18"><circle cx="11" cy="7" r="5.5" fill="none" stroke="#fff" stroke-width="1.3"/><path d="M7 11L1 17" stroke="#fff" stroke-width="1.5"/></svg><div class="t" style="left:88.6px;top:1023.73px;font-size:14.5px;color:#e0e0e0">Введите здесь текст для поиска</div><svg style="position:absolute;left:407px;top:1022px;" width="17" height="15" viewBox="0 0 17 15"><rect x="0.5" y="3.5" width="10" height="8" fill="none" stroke="#fff"/><path d="M0 0.5h11M0 14.5h11" stroke="#fff"/><rect x="14" y="0" width="2" height="2" fill="#fff"/><rect x="14" y="4" width="2" height="11" fill="#fff"/></svg><svg style="position:absolute;left:456px;top:1020px;" width="22" height="19" viewBox="0 0 22 19"><path d="M0 1.2Q0 .7 .5 .7H9l1.2 1.3H21.5V19H0z" fill="#e8a000"/><rect x="0" y="3" width="21.5" height="16" fill="#fdd25a"/><path d="M4 11h14v8h-3.5v-4h-7v4H4z" fill="#3a90e0"/></svg><div style="left:447px;top:1048px;width:31px;height:2px;background:#76b9ed"></div><div style="left:479px;top:1048px;width:8px;height:2px;background:#5a8ab8"></div><svg style="position:absolute;left:504px;top:1018px;" width="25" height="24" viewBox="0 0 25 24"><defs><linearGradient id="eg" x1="0" y1="0" x2="1" y2=".6"><stop offset="0" stop-color="#2aaae8"/><stop offset=".6" stop-color="#38c8b0"/><stop offset="1" stop-color="#60e060"/></linearGradient><linearGradient id="eb" x1="0" y1="0" x2=".6" y2="1"><stop offset="0" stop-color="#1a90e0"/><stop offset="1" stop-color="#0a50a8"/></linearGradient></defs><path d="M1 12C1 5 6 0 12.5 0 19 0 24.5 4.5 24.5 11c0 3-2 5-5 5H15c1-1 1.5-2 1.5-3 0-3-2-5-4.5-5C7 8 2 11 1 12z" fill="url(#eg)"/><path d="M1 12c1-3 5-5 9-5 2.5 0 4.5 1.5 4.5 4 0 1-.5 2-1.2 2.5-1.2.8-2.8.5-3.3-.5-.6 4 3 7 7 7 2.5 0 5-1 6.5-2.5C21 21 17 24 12.5 24 6 24 1 19 1 12z" fill="url(#eb)"/></svg><div style="left:496px;top:1048px;width:40px;height:2px;background:#76b9ed"></div><svg style="position:absolute;left:553px;top:1018px;" width="25" height="23" viewBox="0 0 25 23"><path d="M0 7.5L12.5 0 25 7.5V23H0z" fill="#0a5ab8"/><path d="M2.5 7.5h20l-10 6z" fill="#f2f2f2"/><path d="M0 7.5L12.5 14.5 25 7.5V23H0z" fill="#28a8f0"/><path d="M0 23L12.5 14.5 25 23z" fill="#1890e0"/><path d="M12.5 14.5L25 7.5V23z" fill="#40c0f8" opacity=".6"/></svg><svg style="position:absolute;left:602px;top:1018px;" width="24" height="24" viewBox="0 0 24 24"><defs><linearGradient id="gp" x1="0" y1="0" x2="0" y2="1"><stop offset="0" stop-color="#7a3a98"/><stop offset="1" stop-color="#e890f8"/></linearGradient></defs><rect width="24" height="24" fill="url(#gp)"/><path d="M2 4c1-3 4-4 6-2L5 8 4 15C2 12 1 7 2 4zM22 4c-1-3-4-4-6-2l3 6 1 7c2-3 3-8 2-11z" fill="#e8d090"/><circle cx="12" cy="9" r="5" fill="#f0d8b0"/><path d="M7 8c0-4 3-6 5-6s5 2 5 6l-2-2-3 1-3-1z" fill="#e8c870"/><circle cx="10.5" cy="10" r=".9" fill="#30a0e0"/><circle cx="13.5" cy="10" r=".9" fill="#30a0e0"/><path d="M6 24l1-7c2-2 8-2 10 0l1 7z" fill="#80a040"/><path d="M9 18h6v3H9z" fill="#f0d0b0"/></svg><div style="left:594px;top:1048px;width:40px;height:2px;background:#76b9ed"></div><svg style="position:absolute;left:652px;top:1018px;" width="22" height="24" viewBox="0 0 22 24"><path d="M18 5.5A8.5 8.5 0 1 0 18.5 18" fill="none" stroke="#1a6a9c" stroke-width="2.6"/><path d="M6 12h8" stroke="#1a6a9c" stroke-width="1.8"/><g fill="#1a6a9c"><path d="M12 0l1.5 3h-3z"/><path d="M5 2.5l2.5 2.2-2.8 1z"/><path d="M1 8l3 .8L2 11z"/><path d="M0.5 15l2.8-1 .2 3z"/><path d="M4 21l1.8-2.5 1.5 2.6z"/><path d="M11 24l.2-3 2.6 1.5z"/><path d="M18 3l-.5 3 2.5-.8z"/><path d="M21 20l-3.2-1.2 1.5 3z"/></g></svg><div style="left:643px;top:1048px;width:40px;height:2px;background:#76b9ed"></div><div style="left:688px;top:1010px;width:48px;height:40px;background:#333333"></div><svg style="position:absolute;left:701px;top:1018px;" width="23" height="24" viewBox="0 0 23 24"><path d="M3 5C5 1 10 0 14 1c4 1 7 4 8 8 1 3 0 7-2 9l-6 2z" fill="#140e0c"/><path d="M3 6c2-2 6-3 8-1 2 3 2 8 1 12-1 3-3 5-6 5-3 0-4-4-4-8z" fill="#e0c0a4"/><path d="M4.5 11h2.5M9 11h2" stroke="#907060" stroke-width=".9"/><path d="M5 16.3c.8-.6 1.6-.6 2.2 0" stroke="#b03020" stroke-width="1"/><path d="M5 24c1-2 4-3 7-3s6 1 8 3z" fill="#e8c8b0"/><text x="9" y="22" font-family="Liberation Sans" font-size="11" fill="#e02818">64</text></svg><div style="left:688px;top:1048px;width:48px;height:2px;background:#76b9ed"></div><svg style="position:absolute;left:1410px;top:1025px;" width="14" height="9" viewBox="0 0 14 9"><path d="M1 8L7 2l6 6" fill="none" stroke="#fff" stroke-width="1.3"/></svg><svg style="position:absolute;left:1433px;top:1024px;" width="17" height="14" viewBox="0 0 17 14"><path d="M4 7c0-3 2.5-5 5.5-5 2.5 0 4 1.5 4.5 3.5 1.5 0 2.5 1.5 2.5 3H4z" fill="#9a9a9a"/><path d="M0 10.5C0 8 2 6.5 4 6.5c1.5-2 4.5-2 6 0 1.5 0 2.5 1.5 2.5 3.5 0 2-1.5 3.5-3 3.5H3c-1.8 0-3-1.3-3-3z" fill="#e0e0e0"/><circle cx="11.5" cy="9.5" r="4.5" fill="#e02020"/><path d="M9.6 7.6l3.8 3.8M13.4 7.6l-3.8 3.8" stroke="#fff" stroke-width="1.2"/></svg><svg style="position:absolute;left:1457px;top:1021px;" width="17" height="17" viewBox="0 0 17 17"><path d="M1 2.5L16 1V15L1 13.5z" fill="none" stroke="#fff" stroke-width="1.3"/><path d="M5.5 8c0-2 2-3 4.5-2.2M11 7.5c0 2-2 3-4.5 2.2" fill="none" stroke="#fff" stroke-width="1.1"/><circle cx="12.5" cy="13.5" r="3.5" fill="#2a78d0"/></svg><svg style="position:absolute;left:1481px;top:1022px;" width="17" height="16" viewBox="0 0 17 16"><path d="M0.7 5.5H4L8.5 1.2V14.8L4 10.5H0.7z" fill="none" stroke="#fff" stroke-width="1.2"/><path d="M10.5 5.5c1 1.5 1 3.5 0 5M12.8 3.2c2 2.8 2 6.8 0 9.6M15 1c3 4 3 10 0 14" fill="none" stroke="#fff" stroke-width="1.2"/></svg><svg style="position:absolute;left:1504px;top:1024px;" width="17" height="14" viewBox="0 0 17 14"><path d="M5.5 1.5H16V10.5H5.5zM11 10.5V13M7.5 13.2H14.5M1 0.7H5M1 0.7V4.5H5M2.2 4.5V13.5" fill="none" stroke="#fff" stroke-width="1.2"/></svg><div class="t" style="left:1531px;top:1024.19px;font-size:11px;color:#fff">ENG</div><div class="t" style="left:1580.7px;top:1014.84px;font-size:12px;color:#fff;transform:scaleX(.9);transform-origin:0 0">15:27</div><div class="t" style="left:1567.5px;top:1032.84px;font-size:12px;color:#fff;transform:scaleX(.9);transform-origin:0 0">10.04.2022</div><svg style="position:absolute;left:1639px;top:1021px;" width="26" height="26" viewBox="0 0 26 26"><path d="M0 1h16v13H7l-3 3v-3H0z" fill="#fff"/><path d="M3 4.5h10M3 7.5h10M3 10.5h6" stroke="#111" stroke-width="1.2"/><circle cx="16" cy="16.5" r="8" fill="#2a2a2a" stroke="#707070"/><text x="12.5" y="21" font-family="Liberation Sans" font-weight="bold" font-size="12" fill="#fff">3</text></svg><div style="left:1675px;top:1010px;width:1px;height:40px;background:#606060"></div></body></html>
